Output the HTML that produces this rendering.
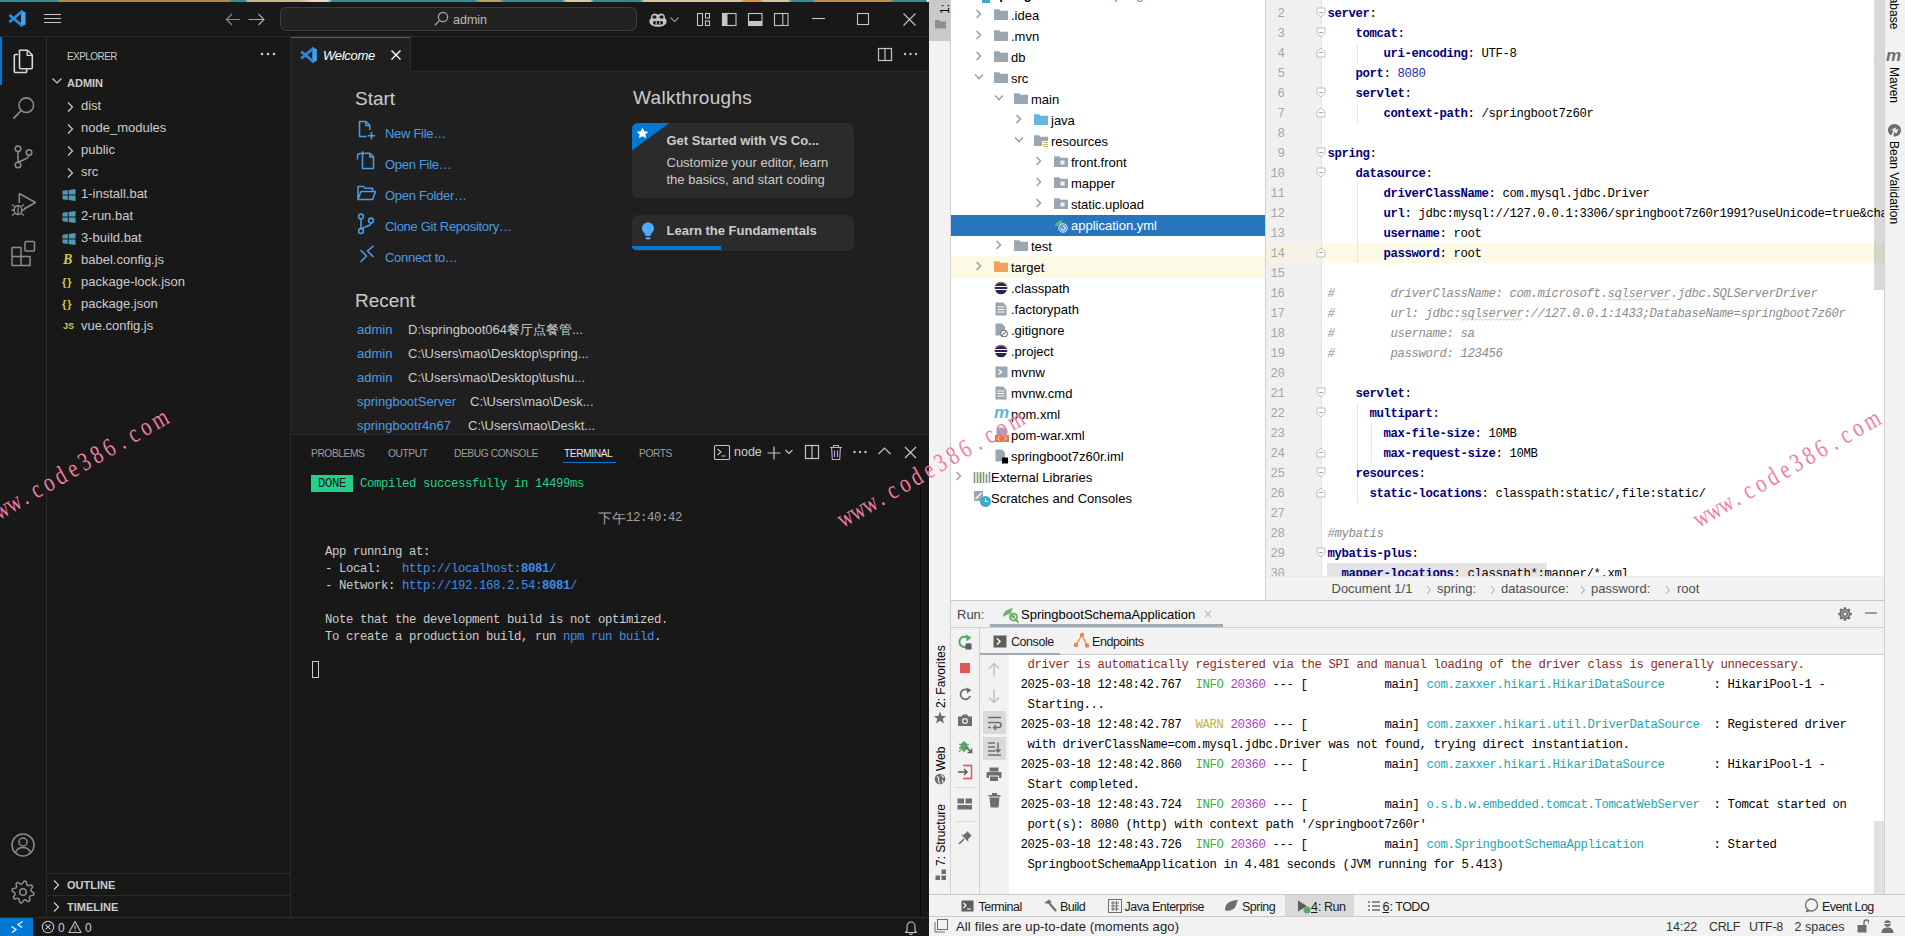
<!DOCTYPE html><html><head><meta charset="utf-8"><style>
html,body{margin:0;padding:0}
body{width:1905px;height:936px;position:relative;overflow:hidden;background:#181818;font-family:"Liberation Sans",sans-serif}
.r{position:absolute;display:block}
.t{position:absolute;white-space:pre}
.clip{position:absolute;overflow:hidden}
</style></head><body>
<style>.t{line-height:0}</style>
<div class="r" style="left:0px;top:0px;width:929px;height:2px;background:linear-gradient(90deg,#2e8e98 0,#2e8e98 57px,#b08a3e 60px,#b08a3e 228px,#2e8e98 232px,#2e8e98 245px,#c9b88e 248px,#c9b88e 300px,#e8dcc0 312px,#e8dcc0 328px,#2e8e98 332px,#2e8e98 474px,#b8a060 480px,#b8a060 500px,#2e8e98 504px,#2e8e98 562px,#d8c8a0 566px,#d8c8a0 590px,#2e8e98 594px,#2e8e98 640px,#d8c8a0 644px,#d8c8a0 740px,#d89a30 744px,#d89a30 760px,#d8c8a0 764px,#d8c8a0 788px,#2e8e98 792px,#2e8e98 812px,#c09040 816px,#c09040 890px,#2e8e98 894px,#2e8e98 926px,#e8e8e0 927px);"></div>
<div class="r" style="left:0px;top:2px;width:929px;height:34px;background:#181818;"></div>
<div class="r" style="left:0px;top:36px;width:929px;height:1px;background:#2b2b2b;"></div>
<svg class="r" style="left:8px;top:9px;" width="19" height="19" viewBox="0 0 19 19"><path d="M13 1.2 L17.6 3.4 V15.6 L13 17.8 Z" fill="#3ea6f0"/><path d="M13.6 2.8 L2.4 12.2 M13.6 16.2 L2.4 6.8" stroke="#2b8ad8" stroke-width="2.8" stroke-linecap="square"/></svg>
<svg class="r" style="left:43px;top:13px;" width="19" height="12" viewBox="0 0 19 12"><path d="M1 1.5H18M1 5.5H18M1 9.5H18" stroke="#c5c5c5" stroke-width="1.1"/></svg>
<svg class="r" style="left:224px;top:12px;" width="18" height="15" viewBox="0 0 18 15"><path d="M2.5 7.5H16M8 2L2.5 7.5L8 13" stroke="#8b8b8b" stroke-width="1.2" fill="none"/></svg>
<svg class="r" style="left:247px;top:12px;" width="20" height="15" viewBox="0 0 20 15"><path d="M1.5 7.5H17M11.5 2L17 7.5L11.5 13" stroke="#a8a8a8" stroke-width="1.2" fill="none"/></svg>
<div class="r" style="left:280px;top:7px;width:355px;height:22px;background:#222222;border:1px solid #3c3c3c;border-radius:6px"></div>
<svg class="r" style="left:433px;top:11px;" width="16" height="16" viewBox="0 0 16 16"><circle cx="10" cy="6" r="4.6" stroke="#a9a9a9" stroke-width="1.2" fill="none"/><path d="M6.6 9.4L1.8 14.2" stroke="#a9a9a9" stroke-width="1.3"/></svg>
<div class="t" style="left:453px;top:19.67px;font-size:12.5px;color:#bdbdbd;font-weight:400;font-family:'Liberation Sans', sans-serif;">admin</div>
<svg class="r" style="left:648px;top:12px;" width="20" height="16" viewBox="0 0 20 16"><path d="M3 5.5C3 2.5 5 1.5 7 1.5C8.5 1.5 9.5 2.3 10 3C10.5 2.3 11.5 1.5 13 1.5C15 1.5 17 2.5 17 5.5V6.5C18.2 7.2 18.6 8.3 18.6 9.5C18.6 12.8 14.5 14.8 10 14.8C5.5 14.8 1.4 12.8 1.4 9.5C1.4 8.3 1.8 7.2 3 6.5Z" fill="#c5c5c5"/>
<rect x="4.6" y="3.4" width="3.8" height="3.2" rx="1.2" fill="#181818"/><rect x="11.6" y="3.4" width="3.8" height="3.2" rx="1.2" fill="#181818"/>
<rect x="5" y="9" width="10" height="3.6" rx="1.6" fill="#181818"/><rect x="7.6" y="9.2" width="1.2" height="3" fill="#c5c5c5"/><rect x="11.2" y="9.2" width="1.2" height="3" fill="#c5c5c5"/></svg>
<svg class="r" style="left:669px;top:16px;" width="11" height="7" viewBox="0 0 11 7"><path d="M1.5 1.5L5.5 5.5L9.5 1.5" stroke="#9a9a9a" stroke-width="1.1" fill="none"/></svg>
<svg class="r" style="left:696px;top:12px;" width="16" height="15" viewBox="0 0 16 15"><rect x="1.5" y="1.5" width="5" height="12" stroke="#c5c5c5" stroke-width="1.1" fill="none"/><rect x="9.5" y="1.5" width="4" height="4.5" stroke="#c5c5c5" stroke-width="1.1" fill="none"/><rect x="9.5" y="9" width="4" height="4.5" stroke="#c5c5c5" stroke-width="1.1" fill="none"/></svg>
<svg class="r" style="left:721px;top:12px;" width="17" height="15" viewBox="0 0 17 15"><rect x="1.5" y="1.5" width="13.5" height="12" stroke="#c5c5c5" stroke-width="1.1" fill="none"/><rect x="1.5" y="1.5" width="5" height="12" fill="#c5c5c5"/></svg>
<svg class="r" style="left:747px;top:12px;" width="17" height="15" viewBox="0 0 17 15"><rect x="1.5" y="1.5" width="13.5" height="12" stroke="#c5c5c5" stroke-width="1.1" fill="none"/><rect x="1.5" y="9" width="13.5" height="4.5" fill="#c5c5c5"/></svg>
<svg class="r" style="left:773px;top:12px;" width="17" height="15" viewBox="0 0 17 15"><rect x="1.5" y="1.5" width="13.5" height="12" stroke="#c5c5c5" stroke-width="1.1" fill="none"/><path d="M9.8 1.5V13.5" stroke="#c5c5c5" stroke-width="1.1"/></svg>
<svg class="r" style="left:810px;top:12px;" width="17" height="14" viewBox="0 0 17 14"><path d="M2 6.5H15" stroke="#c5c5c5" stroke-width="1.1"/></svg>
<svg class="r" style="left:855px;top:11px;" width="16" height="16" viewBox="0 0 16 16"><rect x="2.5" y="2.5" width="11" height="11" stroke="#c5c5c5" stroke-width="1.1" fill="none"/></svg>
<svg class="r" style="left:901px;top:11px;" width="17" height="17" viewBox="0 0 17 17"><path d="M2.5 2.5L14.5 14.5M14.5 2.5L2.5 14.5" stroke="#c5c5c5" stroke-width="1.1"/></svg>
<div class="r" style="left:46px;top:37px;width:1px;height:881px;background:#2b2b2b;"></div>
<div class="r" style="left:0px;top:37px;width:2px;height:48px;background:#0078d4;"></div>
<svg class="r" style="left:10px;top:47px;" width="26" height="28" viewBox="0 0 26 28"><path d="M8 7.5H5.5A1.2 1.2 0 0 0 4.3 8.7V24.3A1.2 1.2 0 0 0 5.5 25.5H15.5A1.2 1.2 0 0 0 16.7 24.3V22" stroke="#d8d8d8" stroke-width="1.6" fill="none"/>
<path d="M9.5 3.2H17.5L22.3 8V20.5A1.2 1.2 0 0 1 21.1 21.7H10.7A1.2 1.2 0 0 1 9.5 20.5Z" stroke="#d8d8d8" stroke-width="1.6" fill="none" stroke-linejoin="round"/>
<path d="M17.2 3.5V8.3H22" stroke="#d8d8d8" stroke-width="1.3" fill="none"/></svg>
<svg class="r" style="left:10px;top:93px;" width="28" height="30" viewBox="0 0 28 30"><circle cx="16.3" cy="12.2" r="7.3" stroke="#8c8c8c" stroke-width="1.6" fill="none"/><path d="M11.2 17.5L3.4 25.6" stroke="#8c8c8c" stroke-width="1.8"/></svg>
<svg class="r" style="left:10px;top:140px;" width="26" height="30" viewBox="0 0 26 30"><circle cx="8" cy="8.8" r="2.8" stroke="#8c8c8c" stroke-width="1.5" fill="none"/><circle cx="19" cy="12.5" r="2.8" stroke="#8c8c8c" stroke-width="1.5" fill="none"/><circle cx="8" cy="25" r="2.8" stroke="#8c8c8c" stroke-width="1.5" fill="none"/><path d="M8 11.6V22.2M19 15.3C19 19 13 19.5 8.6 22.2" stroke="#8c8c8c" stroke-width="1.5" fill="none"/></svg>
<svg class="r" style="left:8px;top:190px;" width="30" height="30" viewBox="0 0 30 30"><path d="M11.3 3.5V13M11.3 3.5L27.5 12.5L16 19" stroke="#8c8c8c" stroke-width="1.5" fill="none" stroke-linejoin="round"/>
<ellipse cx="10" cy="20" rx="3.8" ry="4.6" stroke="#8c8c8c" stroke-width="1.5" fill="none"/><path d="M10 15.4V24.6M6.2 20H3.4M16.6 20H13.8M6.6 16.5L4 14.4M13.4 16.5L16 14.4M6.6 23.5L4 25.6M13.4 23.5L16 25.6" stroke="#8c8c8c" stroke-width="1.3"/></svg>
<svg class="r" style="left:9px;top:238px;" width="28" height="30" viewBox="0 0 28 30"><path d="M3 9.5H12V18.5H3ZM3 18.5H12V27.5H3ZM12 18.5H21V27.5H12Z" stroke="#8c8c8c" stroke-width="1.5" fill="none" stroke-linejoin="round"/><rect x="16" y="3.5" width="9.5" height="9.5" rx="1" stroke="#8c8c8c" stroke-width="1.5" fill="none"/></svg>
<svg class="r" style="left:10px;top:832px;" width="26" height="26" viewBox="0 0 26 26"><circle cx="13" cy="13" r="11" stroke="#8c8c8c" stroke-width="1.5" fill="none"/><circle cx="13" cy="10" r="4" stroke="#8c8c8c" stroke-width="1.5" fill="none"/><path d="M5.5 20.5C7 17 10 15.6 13 15.6C16 15.6 19 17 20.5 20.5" stroke="#8c8c8c" stroke-width="1.5" fill="none"/></svg>
<svg class="r" style="left:10px;top:879px;" width="26" height="26" viewBox="0 0 26 26"><polygon points="14.08,2.05 16.19,2.47 16.87,5.77 18.20,6.66 21.50,6.02 22.70,7.81 20.85,10.62 21.16,12.20 23.95,14.08 23.53,16.19 20.23,16.87 19.34,18.20 19.98,21.50 18.19,22.70 15.38,20.85 13.80,21.16 11.92,23.95 9.81,23.53 9.13,20.23 7.80,19.34 4.50,19.98 3.30,18.19 5.15,15.38 4.84,13.80 2.05,11.92 2.47,9.81 5.77,9.13 6.66,7.80 6.02,4.50 7.81,3.30 10.62,5.15 12.20,4.84" stroke="#8c8c8c" stroke-width="1.5" fill="none" stroke-linejoin="round"/><circle cx="13" cy="13" r="3.3" stroke="#8c8c8c" stroke-width="1.5" fill="none"/></svg>
<div class="r" style="left:47px;top:37px;width:243px;height:881px;background:#181818;"></div>
<div class="r" style="left:290px;top:37px;width:1px;height:881px;background:#2b2b2b;"></div>
<div class="t" style="left:67px;top:55.69px;font-size:11px;color:#cccccc;font-weight:400;font-family:'Liberation Sans', sans-serif;letter-spacing:-0.55px;transform:scaleX(0.9);transform-origin:left">EXPLORER</div>
<svg class="r" style="left:259px;top:50px;" width="18" height="8" viewBox="0 0 18 8"><circle cx="3" cy="4" r="1.3" fill="#cccccc"/><circle cx="9" cy="4" r="1.3" fill="#cccccc"/><circle cx="15" cy="4" r="1.3" fill="#cccccc"/></svg>
<svg class="r" style="left:51px;top:76px;" width="12" height="10" viewBox="0 0 12 10"><path d="M1.5 2.5L6 7L10.5 2.5" stroke="#cccccc" stroke-width="1.2" fill="none"/></svg>
<div class="t" style="left:67px;top:83.19px;font-size:11px;color:#cccccc;font-weight:700;font-family:'Liberation Sans', sans-serif;">ADMIN</div>
<svg class="r" style="left:66px;top:100.5px;" width="8" height="12" viewBox="0 0 8 12"><path d="M2 1.5L6.5 6L2 10.5" stroke="#cccccc" stroke-width="1.2" fill="none"/></svg>
<div class="t" style="left:81px;top:106.0px;font-size:13px;color:#cccccc;font-weight:400;font-family:'Liberation Sans', sans-serif;">dist</div>
<svg class="r" style="left:66px;top:122.5px;" width="8" height="12" viewBox="0 0 8 12"><path d="M2 1.5L6.5 6L2 10.5" stroke="#cccccc" stroke-width="1.2" fill="none"/></svg>
<div class="t" style="left:81px;top:128.0px;font-size:13px;color:#cccccc;font-weight:400;font-family:'Liberation Sans', sans-serif;">node_modules</div>
<svg class="r" style="left:66px;top:144.5px;" width="8" height="12" viewBox="0 0 8 12"><path d="M2 1.5L6.5 6L2 10.5" stroke="#cccccc" stroke-width="1.2" fill="none"/></svg>
<div class="t" style="left:81px;top:150.0px;font-size:13px;color:#cccccc;font-weight:400;font-family:'Liberation Sans', sans-serif;">public</div>
<svg class="r" style="left:66px;top:166.5px;" width="8" height="12" viewBox="0 0 8 12"><path d="M2 1.5L6.5 6L2 10.5" stroke="#cccccc" stroke-width="1.2" fill="none"/></svg>
<div class="t" style="left:81px;top:172.0px;font-size:13px;color:#cccccc;font-weight:400;font-family:'Liberation Sans', sans-serif;">src</div>
<svg class="r" style="left:62px;top:188.5px;" width="14" height="12" viewBox="0 0 14 12"><path d="M0.5 1.8L5.8 1.1V5.6H0.5ZM6.7 1L13.5 0.1V5.6H6.7ZM0.5 6.5H5.8V11L0.5 10.3ZM6.7 6.5H13.5V12L6.7 11.1Z" fill="#519aba"/></svg>
<div class="t" style="left:81px;top:194.0px;font-size:13px;color:#cccccc;font-weight:400;font-family:'Liberation Sans', sans-serif;">1-install.bat</div>
<svg class="r" style="left:62px;top:210.5px;" width="14" height="12" viewBox="0 0 14 12"><path d="M0.5 1.8L5.8 1.1V5.6H0.5ZM6.7 1L13.5 0.1V5.6H6.7ZM0.5 6.5H5.8V11L0.5 10.3ZM6.7 6.5H13.5V12L6.7 11.1Z" fill="#519aba"/></svg>
<div class="t" style="left:81px;top:216.0px;font-size:13px;color:#cccccc;font-weight:400;font-family:'Liberation Sans', sans-serif;">2-run.bat</div>
<svg class="r" style="left:62px;top:232.5px;" width="14" height="12" viewBox="0 0 14 12"><path d="M0.5 1.8L5.8 1.1V5.6H0.5ZM6.7 1L13.5 0.1V5.6H6.7ZM0.5 6.5H5.8V11L0.5 10.3ZM6.7 6.5H13.5V12L6.7 11.1Z" fill="#519aba"/></svg>
<div class="t" style="left:81px;top:238.0px;font-size:13px;color:#cccccc;font-weight:400;font-family:'Liberation Sans', sans-serif;">3-build.bat</div>
<div class="t" style="left:63px;top:259.65px;font-size:14px;color:#cbcb41;font-weight:700;font-family:'Liberation Sans', sans-serif;font-style:italic;font-family:'Liberation Serif',serif">B</div>
<div class="t" style="left:81px;top:260.0px;font-size:13px;color:#cccccc;font-weight:400;font-family:'Liberation Sans', sans-serif;">babel.config.js</div>
<div class="t" style="left:62px;top:282.19px;font-size:11px;color:#cbcb41;font-weight:700;font-family:'Liberation Sans', sans-serif;letter-spacing:-1px">{ }</div>
<div class="t" style="left:81px;top:282.0px;font-size:13px;color:#cccccc;font-weight:400;font-family:'Liberation Sans', sans-serif;">package-lock.json</div>
<div class="t" style="left:62px;top:304.19px;font-size:11px;color:#cbcb41;font-weight:700;font-family:'Liberation Sans', sans-serif;letter-spacing:-1px">{ }</div>
<div class="t" style="left:81px;top:304.0px;font-size:13px;color:#cccccc;font-weight:400;font-family:'Liberation Sans', sans-serif;">package.json</div>
<div class="t" style="left:63px;top:326.38px;font-size:9px;color:#cbcb41;font-weight:700;font-family:'Liberation Sans', sans-serif;">JS</div>
<div class="t" style="left:81px;top:326.0px;font-size:13px;color:#cccccc;font-weight:400;font-family:'Liberation Sans', sans-serif;">vue.config.js</div>
<div class="r" style="left:47px;top:873px;width:243px;height:1px;background:#2b2b2b;"></div>
<div class="r" style="left:47px;top:895px;width:243px;height:1px;background:#2b2b2b;"></div>
<svg class="r" style="left:52px;top:879px;" width="8" height="12" viewBox="0 0 8 12"><path d="M2 1.5L6.5 6L2 10.5" stroke="#cccccc" stroke-width="1.2" fill="none"/></svg>
<div class="t" style="left:67px;top:885.19px;font-size:11px;color:#cccccc;font-weight:700;font-family:'Liberation Sans', sans-serif;">OUTLINE</div>
<svg class="r" style="left:52px;top:901px;" width="8" height="12" viewBox="0 0 8 12"><path d="M2 1.5L6.5 6L2 10.5" stroke="#cccccc" stroke-width="1.2" fill="none"/></svg>
<div class="t" style="left:67px;top:907.19px;font-size:11px;color:#cccccc;font-weight:700;font-family:'Liberation Sans', sans-serif;">TIMELINE</div>
<div class="r" style="left:291px;top:37px;width:638px;height:34px;background:#181818;"></div>
<div class="r" style="left:291px;top:71px;width:638px;height:1px;background:#2b2b2b;"></div>
<div class="r" style="left:291px;top:37px;width:120px;height:35px;background:#1f1f1f;"></div>
<div class="r" style="left:291px;top:37px;width:120px;height:1px;background:#0078d4;"></div>
<div class="r" style="left:410px;top:37px;width:1px;height:34px;background:#2b2b2b;"></div>
<svg class="r" style="left:300px;top:46px;" width="18" height="18" viewBox="0 0 18 18"><path d="M12.3 1 L16.8 3.2 V14.8 L12.3 17 Z" fill="#3ea6f0"/><path d="M13 2.6 L2.2 11.6 M13 15.4 L2.2 6.4" stroke="#2b8ad8" stroke-width="2.7" stroke-linecap="square"/></svg>
<div class="t" style="left:323px;top:55.8px;font-size:13px;color:#ffffff;font-weight:400;font-family:'Liberation Sans', sans-serif;font-style:italic;letter-spacing:-0.3px">Welcome</div>
<svg class="r" style="left:389px;top:48px;" width="14" height="14" viewBox="0 0 14 14"><path d="M2.5 2.5L11.5 11.5M11.5 2.5L2.5 11.5" stroke="#ffffff" stroke-width="1.4"/></svg>
<svg class="r" style="left:877px;top:47px;" width="16" height="15" viewBox="0 0 16 15"><rect x="1.5" y="1.5" width="13" height="12" stroke="#c5c5c5" stroke-width="1.2" fill="none"/><path d="M8 1.5V13.5" stroke="#c5c5c5" stroke-width="1.2"/></svg>
<svg class="r" style="left:902px;top:50px;" width="17" height="8" viewBox="0 0 17 8"><circle cx="3" cy="4" r="1.2" fill="#c5c5c5"/><circle cx="8.5" cy="4" r="1.2" fill="#c5c5c5"/><circle cx="14" cy="4" r="1.2" fill="#c5c5c5"/></svg>
<div class="r" style="left:291px;top:72px;width:638px;height:362px;background:#1f1f1f;"></div>
<div class="t" style="left:355px;top:98.72px;font-size:19px;color:#cccccc;font-weight:400;font-family:'Liberation Sans', sans-serif;">Start</div>
<div class="t" style="left:385px;top:133.7px;font-size:13px;color:#4c9be2;font-weight:400;font-family:'Liberation Sans', sans-serif;letter-spacing:-0.3px">New File…</div>
<div class="t" style="left:385px;top:164.7px;font-size:13px;color:#4c9be2;font-weight:400;font-family:'Liberation Sans', sans-serif;letter-spacing:-0.3px">Open File…</div>
<div class="t" style="left:385px;top:195.7px;font-size:13px;color:#4c9be2;font-weight:400;font-family:'Liberation Sans', sans-serif;letter-spacing:-0.3px">Open Folder…</div>
<div class="t" style="left:385px;top:226.7px;font-size:13px;color:#4c9be2;font-weight:400;font-family:'Liberation Sans', sans-serif;letter-spacing:-0.3px">Clone Git Repository…</div>
<div class="t" style="left:385px;top:257.7px;font-size:13px;color:#4c9be2;font-weight:400;font-family:'Liberation Sans', sans-serif;letter-spacing:-0.3px">Connect to…</div>
<svg class="r" style="left:356px;top:120px;" width="22" height="22" viewBox="0 0 22 22"><path d="M10.5 16.5H3.5V1.5H10L13.8 5.3V10" stroke="#4c9be2" stroke-width="1.55" fill="none" stroke-linejoin="round"/><path d="M9.8 1.5V5.5H13.8" stroke="#4c9be2" stroke-width="1.45" fill="none"/><path d="M15.5 12V19.5M11.8 15.8H19.2" stroke="#4c9be2" stroke-width="1.55"/></svg>
<svg class="r" style="left:356px;top:151px;" width="22" height="22" viewBox="0 0 22 22"><path d="M6.5 4.5V17.5H17.5V5.8L14 2.3H9" stroke="#4c9be2" stroke-width="1.55" fill="none" stroke-linejoin="round"/><path d="M13.8 2.3V6H17.5" stroke="#4c9be2" stroke-width="1.45" fill="none"/><path d="M1.5 8.5V5C1.5 3.6 2.6 2.5 4 2.5H8M6 0.6L8 2.5L6 4.4" stroke="#4c9be2" stroke-width="1.45" fill="none"/></svg>
<svg class="r" style="left:356px;top:183px;" width="22" height="22" viewBox="0 0 22 22"><path d="M2 16.5V3.5H7.5L9.2 5.2H16.5V8.2M2 16.5L5 8.5H19.5L16.5 16.5Z" stroke="#4c9be2" stroke-width="1.55" fill="none" stroke-linejoin="round"/></svg>
<svg class="r" style="left:356px;top:212px;" width="22" height="24" viewBox="0 0 22 24"><circle cx="5" cy="4.5" r="2.4" stroke="#4c9be2" stroke-width="1.55" fill="none"/><circle cx="15" cy="8.5" r="2.4" stroke="#4c9be2" stroke-width="1.55" fill="none"/><circle cx="5" cy="19" r="2.4" stroke="#4c9be2" stroke-width="1.55" fill="none"/><path d="M5 7V16.6M15 11C15 14.5 9 14 5.6 16.8" stroke="#4c9be2" stroke-width="1.55" fill="none"/></svg>
<svg class="r" style="left:357px;top:245px;" width="20" height="19" viewBox="0 0 20 19"><path d="M3.5 5L9.5 11L3.5 17M16.5 0.8L10.5 6L16.5 12" stroke="#4c9be2" stroke-width="1.55" fill="none"/></svg>
<div class="t" style="left:355px;top:301.02px;font-size:19px;color:#cccccc;font-weight:400;font-family:'Liberation Sans', sans-serif;">Recent</div>
<div class="t" style="left:357px;top:329.5px;font-size:13px;color:#4c9be2;font-weight:400;font-family:'Liberation Sans', sans-serif;">admin</div>
<div class="t" style="left:408px;top:329.5px;font-size:13px;color:#cccccc;font-weight:400;font-family:'Liberation Sans', sans-serif;">D:\springboot064餐厅点餐管...</div>
<div class="t" style="left:357px;top:353.5px;font-size:13px;color:#4c9be2;font-weight:400;font-family:'Liberation Sans', sans-serif;">admin</div>
<div class="t" style="left:408px;top:353.5px;font-size:13px;color:#cccccc;font-weight:400;font-family:'Liberation Sans', sans-serif;">C:\Users\mao\Desktop\spring...</div>
<div class="t" style="left:357px;top:377.5px;font-size:13px;color:#4c9be2;font-weight:400;font-family:'Liberation Sans', sans-serif;">admin</div>
<div class="t" style="left:408px;top:377.5px;font-size:13px;color:#cccccc;font-weight:400;font-family:'Liberation Sans', sans-serif;">C:\Users\mao\Desktop\tushu...</div>
<div class="t" style="left:357px;top:401.5px;font-size:13px;color:#4c9be2;font-weight:400;font-family:'Liberation Sans', sans-serif;">springbootServer</div>
<div class="t" style="left:470px;top:401.5px;font-size:13px;color:#cccccc;font-weight:400;font-family:'Liberation Sans', sans-serif;">C:\Users\mao\Desk...</div>
<div class="t" style="left:357px;top:425.5px;font-size:13px;color:#4c9be2;font-weight:400;font-family:'Liberation Sans', sans-serif;">springbootr4n67</div>
<div class="t" style="left:468px;top:425.5px;font-size:13px;color:#cccccc;font-weight:400;font-family:'Liberation Sans', sans-serif;">C:\Users\mao\Deskt...</div>
<div class="t" style="left:633px;top:98.42px;font-size:19px;color:#cccccc;font-weight:400;font-family:'Liberation Sans', sans-serif;letter-spacing:0.3px">Walkthroughs</div>
<div class="r" style="left:632px;top:123px;width:222px;height:75px;background:#2b2b2b;border-radius:6px"></div>
<svg class="r" style="left:632px;top:123px;" width="38" height="28" viewBox="0 0 38 28"><path d="M6 0H37.5L0 27.5V6A6 6 0 0 1 6 0Z" fill="#0078d4"/><path d="M10.5 4.5L12.3 8.3L16.3 8.7L13.3 11.4L14.2 15.3L10.5 13.3L6.8 15.3L7.7 11.4L4.7 8.7L8.7 8.3Z" fill="#ffffff"/></svg>
<div class="t" style="left:666.5px;top:140.5px;font-size:13px;color:#cccccc;font-weight:700;font-family:'Liberation Sans', sans-serif;">Get Started with VS Co...</div>
<div class="t" style="left:666.5px;top:163.0px;font-size:13px;color:#cccccc;font-weight:400;font-family:'Liberation Sans', sans-serif;">Customize your editor, learn</div>
<div class="t" style="left:666.5px;top:179.5px;font-size:13px;color:#cccccc;font-weight:400;font-family:'Liberation Sans', sans-serif;">the basics, and start coding</div>
<div class="r" style="left:632px;top:215px;width:222px;height:36px;background:#2b2b2b;border-radius:6px;overflow:hidden"></div>
<div class="r" style="left:632px;top:246px;width:89px;height:4px;background:#0078d4;border-radius:0 0 0 6px"></div>
<svg class="r" style="left:639px;top:221px;" width="18" height="20" viewBox="0 0 18 20"><path d="M9 1.5C5.4 1.5 3 4.2 3 7.3C3 9.7 4.4 11.2 5.5 12.5C6.2 13.3 6.4 14 6.4 15H11.6C11.6 14 11.8 13.3 12.5 12.5C13.6 11.2 15 9.7 15 7.3C15 4.2 12.6 1.5 9 1.5Z" fill="#4daafc"/><path d="M6.6 16.2H11.4V17.3C11.4 18 10.8 18.6 10.1 18.6H7.9C7.2 18.6 6.6 18 6.6 17.3Z" fill="#4daafc"/></svg>
<div class="t" style="left:666.5px;top:231.0px;font-size:13px;color:#cccccc;font-weight:700;font-family:'Liberation Sans', sans-serif;">Learn the Fundamentals</div>
<div class="r" style="left:291px;top:434px;width:638px;height:483px;background:#181818;"></div>
<div class="r" style="left:291px;top:434px;width:638px;height:1px;background:#2b2b2b;"></div>
<div class="r" style="left:920px;top:484px;width:1px;height:433px;background:#0a0a0a;"></div>
<div class="t" style="left:311px;top:452.99px;font-size:11px;color:#9d9d9d;font-weight:400;font-family:'Liberation Sans', sans-serif;letter-spacing:-0.45px;transform:scaleX(0.93);transform-origin:left">PROBLEMS</div>
<div class="t" style="left:388px;top:452.99px;font-size:11px;color:#9d9d9d;font-weight:400;font-family:'Liberation Sans', sans-serif;letter-spacing:-0.45px;transform:scaleX(0.93);transform-origin:left">OUTPUT</div>
<div class="t" style="left:454px;top:452.99px;font-size:11px;color:#9d9d9d;font-weight:400;font-family:'Liberation Sans', sans-serif;letter-spacing:-0.45px;transform:scaleX(0.93);transform-origin:left">DEBUG CONSOLE</div>
<div class="t" style="left:564px;top:452.99px;font-size:11px;color:#e7e7e7;font-weight:400;font-family:'Liberation Sans', sans-serif;letter-spacing:-0.45px;transform:scaleX(0.93);transform-origin:left">TERMINAL</div>
<div class="t" style="left:639px;top:452.99px;font-size:11px;color:#9d9d9d;font-weight:400;font-family:'Liberation Sans', sans-serif;letter-spacing:-0.45px;transform:scaleX(0.93);transform-origin:left">PORTS</div>
<div class="r" style="left:563px;top:462px;width:53px;height:1px;background:#0078d4;"></div>
<svg class="r" style="left:713px;top:444px;" width="18" height="17" viewBox="0 0 18 17"><rect x="1.5" y="1.5" width="15" height="14" rx="1" stroke="#c5c5c5" stroke-width="1.1" fill="none"/><path d="M4.5 5L8 8L4.5 11M8.5 12H12.5" stroke="#c5c5c5" stroke-width="1.1" fill="none"/></svg>
<div class="t" style="left:734px;top:452.17px;font-size:12.5px;color:#cccccc;font-weight:400;font-family:'Liberation Sans', sans-serif;">node</div>
<svg class="r" style="left:766px;top:445px;" width="16" height="16" viewBox="0 0 16 16"><path d="M8 1.5V14.5M1.5 8H14.5" stroke="#c5c5c5" stroke-width="1.2"/></svg>
<svg class="r" style="left:784px;top:448px;" width="10" height="8" viewBox="0 0 10 8"><path d="M1.5 2L5 5.5L8.5 2" stroke="#c5c5c5" stroke-width="1.1" fill="none"/></svg>
<svg class="r" style="left:804px;top:444px;" width="16" height="16" viewBox="0 0 16 16"><rect x="1.5" y="1.5" width="13" height="13" stroke="#c5c5c5" stroke-width="1.2" fill="none"/><path d="M8 1.5V14.5" stroke="#c5c5c5" stroke-width="1.2"/></svg>
<svg class="r" style="left:829px;top:444px;" width="14" height="17" viewBox="0 0 14 17"><path d="M1 3.5H13M4.5 3.5V1.5H9.5V3.5M2.6 3.5L3.3 15.5H10.7L11.4 3.5M5.5 6.5V13M8.5 6.5V13" stroke="#bfa6dc" stroke-width="1.1" fill="none"/></svg>
<svg class="r" style="left:852px;top:449px;" width="16" height="6" viewBox="0 0 16 6"><circle cx="2.5" cy="3" r="1.2" fill="#c5c5c5"/><circle cx="8" cy="3" r="1.2" fill="#c5c5c5"/><circle cx="13.5" cy="3" r="1.2" fill="#c5c5c5"/></svg>
<svg class="r" style="left:877px;top:446px;" width="15" height="10" viewBox="0 0 15 10"><path d="M1.5 8L7.5 2L13.5 8" stroke="#c5c5c5" stroke-width="1.2" fill="none"/></svg>
<svg class="r" style="left:903px;top:445px;" width="15" height="15" viewBox="0 0 15 15"><path d="M2 2L13 13M13 2L2 13" stroke="#c5c5c5" stroke-width="1.2"/></svg>
<div class="r" style="left:311px;top:475px;width:42px;height:17px;background:#23d18b;"></div>
<div class="t" style="left:318.0px;top:484.42px;font-size:12.3px;color:#181818;font-weight:400;font-family:'Liberation Mono', monospace;letter-spacing:-0.38px;">DONE</div>
<div class="t" style="left:360.0px;top:484.42px;font-size:12.3px;color:#23d18b;font-weight:400;font-family:'Liberation Mono', monospace;letter-spacing:-0.38px;">Compiled successfully in 14499ms</div>
<div class="t" style="left:598.4px;top:517.65px;font-size:14px;color:#a0a0a0;font-weight:400;font-family:'Liberation Sans', sans-serif;font-family:sans-serif">下午</div>
<div class="t" style="left:626.0px;top:518.42px;font-size:12.3px;color:#a0a0a0;font-weight:400;font-family:'Liberation Mono', monospace;letter-spacing:-0.38px;">12:40:42</div>
<div class="t" style="left:325.0px;top:552.42px;font-size:12.3px;color:#cccccc;font-weight:400;font-family:'Liberation Mono', monospace;letter-spacing:-0.38px;">App running at:</div>
<div class="t" style="left:325.0px;top:569.42px;font-size:12.3px;color:#cccccc;font-weight:400;font-family:'Liberation Mono', monospace;letter-spacing:-0.38px;">- Local:   </div>
<div class="t" style="left:402.0px;top:569.42px;font-size:12.3px;color:#3b8eea;font-weight:400;font-family:'Liberation Mono', monospace;letter-spacing:-0.38px;">http://localhost:</div>
<div class="t" style="left:521.0px;top:569.42px;font-size:12.3px;color:#3b8eea;font-weight:400;font-family:'Liberation Mono', monospace;letter-spacing:-0.38px;font-weight:700">8081</div>
<div class="t" style="left:549.0px;top:569.42px;font-size:12.3px;color:#3b8eea;font-weight:400;font-family:'Liberation Mono', monospace;letter-spacing:-0.38px;">/</div>
<div class="t" style="left:325.0px;top:586.42px;font-size:12.3px;color:#cccccc;font-weight:400;font-family:'Liberation Mono', monospace;letter-spacing:-0.38px;">- Network: </div>
<div class="t" style="left:402.0px;top:586.42px;font-size:12.3px;color:#3b8eea;font-weight:400;font-family:'Liberation Mono', monospace;letter-spacing:-0.38px;">http://192.168.2.54:</div>
<div class="t" style="left:542.0px;top:586.42px;font-size:12.3px;color:#3b8eea;font-weight:400;font-family:'Liberation Mono', monospace;letter-spacing:-0.38px;font-weight:700">8081</div>
<div class="t" style="left:570.0px;top:586.42px;font-size:12.3px;color:#3b8eea;font-weight:400;font-family:'Liberation Mono', monospace;letter-spacing:-0.38px;">/</div>
<div class="t" style="left:325.0px;top:620.42px;font-size:12.3px;color:#cccccc;font-weight:400;font-family:'Liberation Mono', monospace;letter-spacing:-0.38px;">Note that the development build is not optimized.</div>
<div class="t" style="left:325.0px;top:637.42px;font-size:12.3px;color:#cccccc;font-weight:400;font-family:'Liberation Mono', monospace;letter-spacing:-0.38px;">To create a production build, run </div>
<div class="t" style="left:563.0px;top:637.42px;font-size:12.3px;color:#3b8eea;font-weight:400;font-family:'Liberation Mono', monospace;letter-spacing:-0.38px;">npm run build</div>
<div class="t" style="left:654.0px;top:637.42px;font-size:12.3px;color:#cccccc;font-weight:400;font-family:'Liberation Mono', monospace;letter-spacing:-0.38px;">.</div>
<div class="r" style="left:312px;top:661px;width:7px;height:17px;background:transparent;border:1px solid #cccccc;box-sizing:border-box"></div>
<div class="r" style="left:0px;top:917px;width:929px;height:1px;background:#2b2b2b;"></div>
<div class="r" style="left:0px;top:918px;width:929px;height:18px;background:#181818;"></div>
<div class="r" style="left:0px;top:918px;width:33px;height:18px;background:#0078d4;"></div>
<svg class="r" style="left:10px;top:920px;" width="14" height="14" viewBox="0 0 14 14"><path d="M1.5 6.5L6 9.5L2 12.5M12.5 1.5L8 4.5L12 7.5" stroke="#ffffff" stroke-width="1.2" fill="none"/></svg>
<svg class="r" style="left:41px;top:920px;" width="14" height="14" viewBox="0 0 14 14"><circle cx="7" cy="7" r="5.7" stroke="#c5c5c5" stroke-width="1.1" fill="none"/><path d="M4.6 4.6L9.4 9.4M9.4 4.6L4.6 9.4" stroke="#c5c5c5" stroke-width="1.1"/></svg>
<div class="t" style="left:58px;top:927.84px;font-size:12px;color:#cccccc;font-weight:400;font-family:'Liberation Sans', sans-serif;">0</div>
<svg class="r" style="left:68px;top:920px;" width="14" height="14" viewBox="0 0 14 14"><path d="M7 1.5L13 12.5H1Z" stroke="#c5c5c5" stroke-width="1.1" fill="none" stroke-linejoin="round"/><path d="M7 5.5V9M7 10.3V11.3" stroke="#c5c5c5" stroke-width="1.1"/></svg>
<div class="t" style="left:85px;top:927.84px;font-size:12px;color:#cccccc;font-weight:400;font-family:'Liberation Sans', sans-serif;">0</div>
<svg class="r" style="left:904px;top:920px;" width="14" height="15" viewBox="0 0 14 15"><path d="M3 11V6.5C3 4 4.8 2 7 2C9.2 2 11 4 11 6.5V11L12.5 12.5H1.5Z" stroke="#c5c5c5" stroke-width="1.1" fill="none" stroke-linejoin="round"/><path d="M5.5 13.5C5.8 14.3 6.3 14.6 7 14.6C7.7 14.6 8.2 14.3 8.5 13.5" stroke="#c5c5c5" stroke-width="1.1" fill="none"/></svg>
<div class="r" style="left:929px;top:0px;width:976px;height:936px;background:#ffffff;"></div>
<div class="r" style="left:929px;top:0px;width:21px;height:895px;background:#f2f2f2;"></div>
<div class="r" style="left:950px;top:0px;width:1px;height:895px;background:#d1d1d1;"></div>
<div class="r" style="left:929px;top:0px;width:21px;height:41px;background:#c9c9c9;"></div>
<div class="t" style="left:945px;top:14px;transform:rotate(-90deg);transform-origin:0 0;font-size:12px;line-height:0;color:#000">1: Project</div>
<svg class="r" style="left:935px;top:19px;" width="11" height="10" viewBox="0 0 11 10"><path d="M0 1H4L5 2.5H11V9.5H0Z" fill="#8e8e8e"/></svg>
<div class="t" style="left:935px;top:708px;transform:rotate(-90deg);transform-origin:0 0;font-size:12px;line-height:12px;color:#000;font-family:'Liberation Sans', sans-serif">2: Favorites</div>
<svg class="r" style="left:933px;top:711px;" width="14" height="14" viewBox="0 0 14 14"><path d="M7 0.8L8.8 5H13.3L9.7 7.8L11 12.5L7 9.7L3 12.5L4.3 7.8L0.7 5H5.2Z" fill="#6e6e6e"/></svg>
<div class="t" style="left:935px;top:771px;transform:rotate(-90deg);transform-origin:0 0;font-size:12px;line-height:12px;color:#000;font-family:'Liberation Sans', sans-serif">Web</div>
<svg class="r" style="left:934px;top:773px;" width="12" height="12" viewBox="0 0 12 12"><circle cx="6" cy="6" r="5.3" fill="#6e6e6e"/><path d="M3 3.5C4.5 4 5 5 4.5 6.5C4 8 5 9 6 10.5M8 1.5C7.5 3 8.5 4 10 4.5M9 7C8 8 8.5 9.5 9.5 10" stroke="#f2f2f2" stroke-width="1.1" fill="none"/></svg>
<div class="t" style="left:935px;top:866px;transform:rotate(-90deg);transform-origin:0 0;font-size:12px;line-height:12px;color:#000;font-family:'Liberation Sans', sans-serif">7: Structure</div>
<svg class="r" style="left:935px;top:869px;" width="12" height="12" viewBox="0 0 12 12"><rect x="6.5" y="0.5" width="4.5" height="4.5" fill="#6e6e6e"/><rect x="0.5" y="6.5" width="4.5" height="4.5" fill="#6e6e6e"/><rect x="6.5" y="6.5" width="4.5" height="4.5" fill="#6e6e6e"/></svg>
<div class="r" style="left:1884px;top:0px;width:1px;height:895px;background:#d1d1d1;"></div>
<div class="r" style="left:1885px;top:0px;width:20px;height:895px;background:#f2f2f2;"></div>
<div class="t" style="left:1900px;top:-22px;transform:rotate(90deg);transform-origin:0 0;font-size:12px;line-height:12px;color:#000;font-family:'Liberation Sans', sans-serif">Database</div>
<div class="t" style="left:1886px;top:56px;font-size:17px;line-height:0;color:#6e6e6e;font-weight:700;font-style:italic">m</div>
<div class="t" style="left:1900px;top:67px;transform:rotate(90deg);transform-origin:0 0;font-size:12px;line-height:12px;color:#000;font-family:'Liberation Sans', sans-serif">Maven</div>
<svg class="r" style="left:1887px;top:123px;" width="15" height="15" viewBox="0 0 15 15"><path d="M7.5 1C4 1 1 3.8 1 7.3C1 9.5 2.2 11.4 4 12.5L6.5 8L4.5 6.5L9 4.5L8.5 7L11.5 5.5L9.5 10.5L7 9L6.5 13.5C6.8 13.6 7.2 13.6 7.5 13.6C11 13.6 14 10.8 14 7.3C14 3.8 11 1 7.5 1Z" fill="#6e6e6e"/></svg>
<div class="t" style="left:1900px;top:141px;transform:rotate(90deg);transform-origin:0 0;font-size:12px;line-height:12px;color:#000;font-family:'Liberation Sans', sans-serif">Bean Validation</div>
<div class="r" style="left:951px;top:0px;width:314px;height:600px;background:#ffffff;"></div>
<div class="r" style="left:951px;top:256px;width:314px;height:22px;background:#fcfae6;"></div>
<div class="r" style="left:951px;top:215px;width:314px;height:21px;background:#2675bf;"></div>
<svg class="r" style="left:982px;top:-8px;" width="8" height="11" viewBox="0 0 8 11"><rect x="0" y="0" width="8" height="11" fill="#40a8c8"/></svg>
<div class="t" style="left:992px;top:-5.5px;font-size:13px;color:#000;font-weight:700;font-family:'Liberation Sans', sans-serif;">springboot7z60r</div>
<div class="t" style="left:1108px;top:-5.5px;font-size:13px;color:#808080;font-weight:400;font-family:'Liberation Sans', sans-serif;">springboot</div>
<svg class="r" style="left:975px;top:9px;" width="8" height="10" viewBox="0 0 8 10"><path d="M1.5 1L5.5 5L1.5 9" stroke="#a2a2a2" stroke-width="1.6" fill="none"/></svg>
<svg class="r" style="left:994px;top:8px;" width="15" height="14" viewBox="0 0 15 14"><path d="M0 1.2H5.2L6.6 2.8H14V12H0Z" fill="#9aa7b0"/></svg>
<div class="t" style="left:1011px;top:15.5px;font-size:13px;color:#000000;font-weight:400;font-family:'Liberation Sans', sans-serif;">.idea</div>
<svg class="r" style="left:975px;top:30px;" width="8" height="10" viewBox="0 0 8 10"><path d="M1.5 1L5.5 5L1.5 9" stroke="#a2a2a2" stroke-width="1.6" fill="none"/></svg>
<svg class="r" style="left:994px;top:29px;" width="15" height="14" viewBox="0 0 15 14"><path d="M0 1.2H5.2L6.6 2.8H14V12H0Z" fill="#9aa7b0"/></svg>
<div class="t" style="left:1011px;top:36.5px;font-size:13px;color:#000000;font-weight:400;font-family:'Liberation Sans', sans-serif;">.mvn</div>
<svg class="r" style="left:975px;top:51px;" width="8" height="10" viewBox="0 0 8 10"><path d="M1.5 1L5.5 5L1.5 9" stroke="#a2a2a2" stroke-width="1.6" fill="none"/></svg>
<svg class="r" style="left:994px;top:50px;" width="15" height="14" viewBox="0 0 15 14"><path d="M0 1.2H5.2L6.6 2.8H14V12H0Z" fill="#9aa7b0"/></svg>
<div class="t" style="left:1011px;top:57.5px;font-size:13px;color:#000000;font-weight:400;font-family:'Liberation Sans', sans-serif;">db</div>
<svg class="r" style="left:974px;top:73px;" width="10" height="8" viewBox="0 0 10 8"><path d="M1 1.5L5 5.5L9 1.5" stroke="#a2a2a2" stroke-width="1.6" fill="none"/></svg>
<svg class="r" style="left:994px;top:71px;" width="15" height="14" viewBox="0 0 15 14"><path d="M0 1.2H5.2L6.6 2.8H14V12H0Z" fill="#9aa7b0"/></svg>
<div class="t" style="left:1011px;top:78.5px;font-size:13px;color:#000000;font-weight:400;font-family:'Liberation Sans', sans-serif;">src</div>
<svg class="r" style="left:994px;top:94px;" width="10" height="8" viewBox="0 0 10 8"><path d="M1 1.5L5 5.5L9 1.5" stroke="#a2a2a2" stroke-width="1.6" fill="none"/></svg>
<svg class="r" style="left:1014px;top:92px;" width="15" height="14" viewBox="0 0 15 14"><path d="M0 1.2H5.2L6.6 2.8H14V12H0Z" fill="#9aa7b0"/></svg>
<div class="t" style="left:1031px;top:99.5px;font-size:13px;color:#000000;font-weight:400;font-family:'Liberation Sans', sans-serif;">main</div>
<svg class="r" style="left:1015px;top:114px;" width="8" height="10" viewBox="0 0 8 10"><path d="M1.5 1L5.5 5L1.5 9" stroke="#a2a2a2" stroke-width="1.6" fill="none"/></svg>
<svg class="r" style="left:1034px;top:113px;" width="15" height="14" viewBox="0 0 15 14"><path d="M0 1.2H5.2L6.6 2.8H14V12H0Z" fill="#62b8de"/></svg>
<div class="t" style="left:1051px;top:120.5px;font-size:13px;color:#000000;font-weight:400;font-family:'Liberation Sans', sans-serif;">java</div>
<svg class="r" style="left:1014px;top:136px;" width="10" height="8" viewBox="0 0 10 8"><path d="M1 1.5L5 5.5L9 1.5" stroke="#a2a2a2" stroke-width="1.6" fill="none"/></svg>
<svg class="r" style="left:1034px;top:134px;" width="15" height="14" viewBox="0 0 15 14"><path d="M0 1.2H5.2L6.6 2.8H14V12H0Z" fill="#9aa7b0"/><rect x="8" y="7" width="7" height="7" fill="#ffffff"/><path d="M9 8.5H14M9 10.5H14M9 12.5H14" stroke="#d4b84a" stroke-width="1"/></svg>
<div class="t" style="left:1051px;top:141.5px;font-size:13px;color:#000000;font-weight:400;font-family:'Liberation Sans', sans-serif;">resources</div>
<svg class="r" style="left:1035px;top:156px;" width="8" height="10" viewBox="0 0 8 10"><path d="M1.5 1L5.5 5L1.5 9" stroke="#a2a2a2" stroke-width="1.6" fill="none"/></svg>
<svg class="r" style="left:1054px;top:155px;" width="15" height="14" viewBox="0 0 15 14"><path d="M0 1.2H5.2L6.6 2.8H14V12H0Z" fill="#9aa7b0"/><rect x="6.5" y="5.5" width="4" height="4" fill="#ffffff" opacity="0.85"/></svg>
<div class="t" style="left:1071px;top:162.5px;font-size:13px;color:#000000;font-weight:400;font-family:'Liberation Sans', sans-serif;">front.front</div>
<svg class="r" style="left:1035px;top:177px;" width="8" height="10" viewBox="0 0 8 10"><path d="M1.5 1L5.5 5L1.5 9" stroke="#a2a2a2" stroke-width="1.6" fill="none"/></svg>
<svg class="r" style="left:1054px;top:176px;" width="15" height="14" viewBox="0 0 15 14"><path d="M0 1.2H5.2L6.6 2.8H14V12H0Z" fill="#9aa7b0"/><rect x="6.5" y="5.5" width="4" height="4" fill="#ffffff" opacity="0.85"/></svg>
<div class="t" style="left:1071px;top:183.5px;font-size:13px;color:#000000;font-weight:400;font-family:'Liberation Sans', sans-serif;">mapper</div>
<svg class="r" style="left:1035px;top:198px;" width="8" height="10" viewBox="0 0 8 10"><path d="M1.5 1L5.5 5L1.5 9" stroke="#a2a2a2" stroke-width="1.6" fill="none"/></svg>
<svg class="r" style="left:1054px;top:197px;" width="15" height="14" viewBox="0 0 15 14"><path d="M0 1.2H5.2L6.6 2.8H14V12H0Z" fill="#9aa7b0"/><rect x="6.5" y="5.5" width="4" height="4" fill="#ffffff" opacity="0.85"/></svg>
<div class="t" style="left:1071px;top:204.5px;font-size:13px;color:#000000;font-weight:400;font-family:'Liberation Sans', sans-serif;">static.upload</div>
<svg class="r" style="left:1053px;top:218px;" width="16" height="15" viewBox="0 0 16 15"><path d="M2 9C2 5 5 2.5 10 2.5C9 4 8.5 5 9 6.5C6 6.5 4 7.5 2 9Z" fill="#6cb36c"/><circle cx="10" cy="10" r="4.3" fill="#5a9bd0" stroke="#ffffff" stroke-width="0.8"/><path d="M8 10.2A2 2 0 1 0 10 8.2" stroke="#ffffff" stroke-width="1" fill="none"/></svg>
<div class="t" style="left:1071px;top:225.5px;font-size:13px;color:#ffffff;font-weight:400;font-family:'Liberation Sans', sans-serif;">application.yml</div>
<svg class="r" style="left:995px;top:240px;" width="8" height="10" viewBox="0 0 8 10"><path d="M1.5 1L5.5 5L1.5 9" stroke="#a2a2a2" stroke-width="1.6" fill="none"/></svg>
<svg class="r" style="left:1014px;top:239px;" width="15" height="14" viewBox="0 0 15 14"><path d="M0 1.2H5.2L6.6 2.8H14V12H0Z" fill="#9aa7b0"/></svg>
<div class="t" style="left:1031px;top:246.5px;font-size:13px;color:#000000;font-weight:400;font-family:'Liberation Sans', sans-serif;">test</div>
<svg class="r" style="left:975px;top:261px;" width="8" height="10" viewBox="0 0 8 10"><path d="M1.5 1L5.5 5L1.5 9" stroke="#a2a2a2" stroke-width="1.6" fill="none"/></svg>
<svg class="r" style="left:994px;top:260px;" width="15" height="14" viewBox="0 0 15 14"><path d="M0 1.2H5.2L6.6 2.8H14V12H0Z" fill="#f4a05a"/></svg>
<div class="t" style="left:1011px;top:267.5px;font-size:13px;color:#000000;font-weight:400;font-family:'Liberation Sans', sans-serif;">target</div>
<svg class="r" style="left:994px;top:281px;" width="14" height="14" viewBox="0 0 14 14"><circle cx="7" cy="7" r="6.3" fill="#2c2255"/><path d="M1 5.5H13M0.8 8.5H13.2" stroke="#ffffff" stroke-width="1.1"/><path d="M2.5 3.5A6 6 0 0 1 11.5 3.5" stroke="#f7941e" stroke-width="0.8" fill="none"/></svg>
<div class="t" style="left:1011px;top:288.5px;font-size:13px;color:#000000;font-weight:400;font-family:'Liberation Sans', sans-serif;">.classpath</div>
<svg class="r" style="left:995px;top:302px;" width="12" height="14" viewBox="0 0 12 14"><path d="M0.5 0.5H8L11.5 4V13.5H0.5Z" fill="#9aa7b0"/><path d="M2.5 5H9.5M2.5 7.5H9.5M2.5 10H9.5" stroke="#ffffff" stroke-width="1"/></svg>
<div class="t" style="left:1011px;top:309.5px;font-size:13px;color:#000000;font-weight:400;font-family:'Liberation Sans', sans-serif;">.factorypath</div>
<svg class="r" style="left:995px;top:323px;" width="14" height="15" viewBox="0 0 14 15"><path d="M0.5 0.5H7L10 3.5V12.5H0.5Z" fill="#9aa7b0"/><circle cx="9" cy="10.5" r="3.3" fill="#ffffff" stroke="#6e6e6e" stroke-width="1.1"/><path d="M6.8 12.7L11.2 8.3" stroke="#6e6e6e" stroke-width="1.1"/></svg>
<div class="t" style="left:1011px;top:330.5px;font-size:13px;color:#000000;font-weight:400;font-family:'Liberation Sans', sans-serif;">.gitignore</div>
<svg class="r" style="left:994px;top:344px;" width="14" height="14" viewBox="0 0 14 14"><circle cx="7" cy="7" r="6.3" fill="#2c2255"/><path d="M1 5.5H13M0.8 8.5H13.2" stroke="#ffffff" stroke-width="1.1"/><path d="M2.5 3.5A6 6 0 0 1 11.5 3.5" stroke="#f7941e" stroke-width="0.8" fill="none"/></svg>
<div class="t" style="left:1011px;top:351.5px;font-size:13px;color:#000000;font-weight:400;font-family:'Liberation Sans', sans-serif;">.project</div>
<svg class="r" style="left:995px;top:366px;" width="14" height="12" viewBox="0 0 14 12"><rect x="0.5" y="0.5" width="12" height="11" fill="#9aa7b0"/><path d="M3.5 3.5L6.5 6L3.5 8.5" stroke="#ffffff" stroke-width="1.3" fill="none"/></svg>
<div class="t" style="left:1011px;top:372.5px;font-size:13px;color:#000000;font-weight:400;font-family:'Liberation Sans', sans-serif;">mvnw</div>
<svg class="r" style="left:995px;top:386px;" width="12" height="14" viewBox="0 0 12 14"><path d="M0.5 0.5H8L11.5 4V13.5H0.5Z" fill="#9aa7b0"/><path d="M2.5 5H9.5M2.5 7.5H9.5M2.5 10H9.5" stroke="#ffffff" stroke-width="1"/></svg>
<div class="t" style="left:1011px;top:393.5px;font-size:13px;color:#000000;font-weight:400;font-family:'Liberation Sans', sans-serif;">mvnw.cmd</div>
<div class="t" style="left:994px;top:413.11px;font-size:17px;color:#5fb8cf;font-weight:700;font-family:'Liberation Sans', sans-serif;font-style:italic">m</div>
<div class="t" style="left:1011px;top:414.5px;font-size:13px;color:#000000;font-weight:400;font-family:'Liberation Sans', sans-serif;">pom.xml</div>
<svg class="r" style="left:995px;top:427px;" width="14" height="16" viewBox="0 0 14 16"><path d="M1.5 0.5H8L11 3.5V8H1.5Z" fill="#9aa7b0"/><rect x="0" y="8" width="14" height="7" fill="#e07a4a"/><path d="M4.5 9.5L2.5 11.5L4.5 13.5M9.5 9.5L11.5 11.5L9.5 13.5" stroke="#ffffff" stroke-width="1" fill="none"/></svg>
<div class="t" style="left:1011px;top:435.5px;font-size:13px;color:#000000;font-weight:400;font-family:'Liberation Sans', sans-serif;">pom-war.xml</div>
<svg class="r" style="left:995px;top:449px;" width="14" height="15" viewBox="0 0 14 15"><path d="M0.5 0.5H7L10 3.5V12.5H0.5Z" fill="#9aa7b0"/><rect x="7" y="8.5" width="6" height="6" fill="#000000"/></svg>
<div class="t" style="left:1011px;top:456.5px;font-size:13px;color:#000000;font-weight:400;font-family:'Liberation Sans', sans-serif;">springboot7z60r.iml</div>
<svg class="r" style="left:955px;top:471px;" width="8" height="10" viewBox="0 0 8 10"><path d="M1.5 1L5.5 5L1.5 9" stroke="#a2a2a2" stroke-width="1.6" fill="none"/></svg>
<svg class="r" style="left:973px;top:470px;" width="18" height="14" viewBox="0 0 18 14"><path d="M1.5 2V13M4.5 2V13M7.5 4V13M10.5 2V13M13.5 4V13M16.5 2V13" stroke="#8e8e8e" stroke-width="1.6"/><path d="M7.5 2V13" stroke="#62b543" stroke-width="1.6"/></svg>
<div class="t" style="left:991px;top:477.5px;font-size:13px;color:#000000;font-weight:400;font-family:'Liberation Sans', sans-serif;">External Libraries</div>
<svg class="r" style="left:973px;top:490px;" width="19" height="18" viewBox="0 0 19 18"><path d="M1 1H10V11H1Z" fill="#9aa7b0"/><path d="M2.5 9L8.5 3" stroke="#ffffff" stroke-width="1.2"/><circle cx="12.5" cy="11.5" r="5.5" fill="#40a8c8"/><path d="M12.5 8.5V11.5H14.8" stroke="#ffffff" stroke-width="1.1" fill="none"/></svg>
<div class="t" style="left:991px;top:498.5px;font-size:13px;color:#000000;font-weight:400;font-family:'Liberation Sans', sans-serif;">Scratches and Consoles</div>
<div class="r" style="left:1265px;top:0px;width:1px;height:600px;background:#d1d1d1;"></div>
<div class="r" style="left:1266px;top:0px;width:618px;height:576px;background:#ffffff;"></div>
<div class="r" style="left:1266px;top:243px;width:618px;height:20px;background:#fcfae6;"></div>
<div class="r" style="left:1266px;top:0px;width:55px;height:576px;background:#f0f0f0;"></div>
<div class="r" style="left:1266px;top:243px;width:55px;height:20px;background:#f5f2e3;"></div>
<div class="r" style="left:1321px;top:0px;width:1px;height:576px;background:#e3e3e3;"></div>
<div class="clip" style="left:1266px;top:0;width:618px;height:576px">
<div class="r" style="left:61px;top:563px;width:220px;height:20px;background:#e4e4e4"></div>
<div class="r" style="left:91px;top:44px;width:1px;height:20px;background:#e6e6e6"></div>
<div class="r" style="left:91px;top:103px;width:1px;height:20px;background:#e6e6e6"></div>
<div class="r" style="left:91px;top:183px;width:1px;height:80px;background:#e6e6e6"></div>
<div class="r" style="left:105px;top:423px;width:1px;height:40px;background:#e6e6e6"></div>
<div class="r" style="left:91px;top:403px;width:1px;height:100px;background:#e6e6e6"></div>
<div class="t" style="left:11.5px;top:-6.28px;font-size:12.3px;font-family:'Liberation Mono', monospace;color:#a6a6a6;letter-spacing:-0.38px;">1</div>
<div class="t" style="left:11.5px;top:13.72px;font-size:12.3px;font-family:'Liberation Mono', monospace;color:#a6a6a6;letter-spacing:-0.38px;">2</div>
<div class="t" style="left:61.5px;top:13.72px;font-size:12.3px;font-family:'Liberation Mono', monospace;letter-spacing:-0.38px;"><span style="color:#000080;font-weight:700">server</span><span style="color:#000000">:</span></div>
<div class="t" style="left:11.5px;top:33.72px;font-size:12.3px;font-family:'Liberation Mono', monospace;color:#a6a6a6;letter-spacing:-0.38px;">3</div>
<div class="t" style="left:61.5px;top:33.72px;font-size:12.3px;font-family:'Liberation Mono', monospace;letter-spacing:-0.38px;"><span style="color:#000080;font-weight:700">    tomcat</span><span style="color:#000000">:</span></div>
<div class="t" style="left:11.5px;top:53.72px;font-size:12.3px;font-family:'Liberation Mono', monospace;color:#a6a6a6;letter-spacing:-0.38px;">4</div>
<div class="t" style="left:61.5px;top:53.72px;font-size:12.3px;font-family:'Liberation Mono', monospace;letter-spacing:-0.38px;"><span style="color:#000080;font-weight:700">        uri-encoding</span><span style="color:#000000">: UTF-8</span></div>
<div class="t" style="left:11.5px;top:73.72px;font-size:12.3px;font-family:'Liberation Mono', monospace;color:#a6a6a6;letter-spacing:-0.38px;">5</div>
<div class="t" style="left:61.5px;top:73.72px;font-size:12.3px;font-family:'Liberation Mono', monospace;letter-spacing:-0.38px;"><span style="color:#000080;font-weight:700">    port</span><span style="color:#000000">: </span><span style="color:#2b2b9c">8080</span></div>
<div class="t" style="left:11.5px;top:93.72px;font-size:12.3px;font-family:'Liberation Mono', monospace;color:#a6a6a6;letter-spacing:-0.38px;">6</div>
<div class="t" style="left:61.5px;top:93.72px;font-size:12.3px;font-family:'Liberation Mono', monospace;letter-spacing:-0.38px;"><span style="color:#000080;font-weight:700">    servlet</span><span style="color:#000000">:</span></div>
<div class="t" style="left:11.5px;top:113.72px;font-size:12.3px;font-family:'Liberation Mono', monospace;color:#a6a6a6;letter-spacing:-0.38px;">7</div>
<div class="t" style="left:61.5px;top:113.72px;font-size:12.3px;font-family:'Liberation Mono', monospace;letter-spacing:-0.38px;"><span style="color:#000080;font-weight:700">        context-path</span><span style="color:#000000">: /springboot7z60r</span></div>
<div class="t" style="left:11.5px;top:133.72px;font-size:12.3px;font-family:'Liberation Mono', monospace;color:#a6a6a6;letter-spacing:-0.38px;">8</div>
<div class="t" style="left:11.5px;top:153.72px;font-size:12.3px;font-family:'Liberation Mono', monospace;color:#a6a6a6;letter-spacing:-0.38px;">9</div>
<div class="t" style="left:61.5px;top:153.72px;font-size:12.3px;font-family:'Liberation Mono', monospace;letter-spacing:-0.38px;"><span style="color:#000080;font-weight:700">spring</span><span style="color:#000000">:</span></div>
<div class="t" style="left:4.5px;top:173.72px;font-size:12.3px;font-family:'Liberation Mono', monospace;color:#a6a6a6;letter-spacing:-0.38px;">10</div>
<div class="t" style="left:61.5px;top:173.72px;font-size:12.3px;font-family:'Liberation Mono', monospace;letter-spacing:-0.38px;"><span style="color:#000080;font-weight:700">    datasource</span><span style="color:#000000">:</span></div>
<div class="t" style="left:4.5px;top:193.72px;font-size:12.3px;font-family:'Liberation Mono', monospace;color:#a6a6a6;letter-spacing:-0.38px;">11</div>
<div class="t" style="left:61.5px;top:193.72px;font-size:12.3px;font-family:'Liberation Mono', monospace;letter-spacing:-0.38px;"><span style="color:#000080;font-weight:700">        driverClassName</span><span style="color:#000000">: com.mysql.jdbc.Driver</span></div>
<div class="t" style="left:4.5px;top:213.72px;font-size:12.3px;font-family:'Liberation Mono', monospace;color:#a6a6a6;letter-spacing:-0.38px;">12</div>
<div class="t" style="left:61.5px;top:213.72px;font-size:12.3px;font-family:'Liberation Mono', monospace;letter-spacing:-0.38px;"><span style="color:#000080;font-weight:700">        url</span><span style="color:#000000">: jdbc:mysql://127.0.0.1:3306/springboot7z60r1991?useUnicode=true&amp;characterEncoding=utf-8</span></div>
<div class="t" style="left:4.5px;top:233.72px;font-size:12.3px;font-family:'Liberation Mono', monospace;color:#a6a6a6;letter-spacing:-0.38px;">13</div>
<div class="t" style="left:61.5px;top:233.72px;font-size:12.3px;font-family:'Liberation Mono', monospace;letter-spacing:-0.38px;"><span style="color:#000080;font-weight:700">        username</span><span style="color:#000000">: root</span></div>
<div class="t" style="left:4.5px;top:253.72px;font-size:12.3px;font-family:'Liberation Mono', monospace;color:#a6a6a6;letter-spacing:-0.38px;">14</div>
<div class="t" style="left:61.5px;top:253.72px;font-size:12.3px;font-family:'Liberation Mono', monospace;letter-spacing:-0.38px;"><span style="color:#000080;font-weight:700">        password</span><span style="color:#000000">: root</span></div>
<div class="t" style="left:4.5px;top:273.72px;font-size:12.3px;font-family:'Liberation Mono', monospace;color:#a6a6a6;letter-spacing:-0.38px;">15</div>
<div class="t" style="left:4.5px;top:293.72px;font-size:12.3px;font-family:'Liberation Mono', monospace;color:#a6a6a6;letter-spacing:-0.38px;">16</div>
<div class="t" style="left:61.5px;top:293.72px;font-size:12.3px;font-family:'Liberation Mono', monospace;letter-spacing:-0.38px;"><span style="color:#8c8c8c;font-style:italic">#        driverClassName: com.microsoft.sqlserver.jdbc.SQLServerDriver</span></div>
<div class="t" style="left:4.5px;top:313.72px;font-size:12.3px;font-family:'Liberation Mono', monospace;color:#a6a6a6;letter-spacing:-0.38px;">17</div>
<div class="t" style="left:61.5px;top:313.72px;font-size:12.3px;font-family:'Liberation Mono', monospace;letter-spacing:-0.38px;"><span style="color:#8c8c8c;font-style:italic">#        url: jdbc:sqlserver://127.0.0.1:1433;DatabaseName=springboot7z60r</span></div>
<div class="t" style="left:4.5px;top:333.72px;font-size:12.3px;font-family:'Liberation Mono', monospace;color:#a6a6a6;letter-spacing:-0.38px;">18</div>
<div class="t" style="left:61.5px;top:333.72px;font-size:12.3px;font-family:'Liberation Mono', monospace;letter-spacing:-0.38px;"><span style="color:#8c8c8c;font-style:italic">#        username: sa</span></div>
<div class="t" style="left:4.5px;top:353.72px;font-size:12.3px;font-family:'Liberation Mono', monospace;color:#a6a6a6;letter-spacing:-0.38px;">19</div>
<div class="t" style="left:61.5px;top:353.72px;font-size:12.3px;font-family:'Liberation Mono', monospace;letter-spacing:-0.38px;"><span style="color:#8c8c8c;font-style:italic">#        password: 123456</span></div>
<div class="t" style="left:4.5px;top:373.72px;font-size:12.3px;font-family:'Liberation Mono', monospace;color:#a6a6a6;letter-spacing:-0.38px;">20</div>
<div class="t" style="left:4.5px;top:393.72px;font-size:12.3px;font-family:'Liberation Mono', monospace;color:#a6a6a6;letter-spacing:-0.38px;">21</div>
<div class="t" style="left:61.5px;top:393.72px;font-size:12.3px;font-family:'Liberation Mono', monospace;letter-spacing:-0.38px;"><span style="color:#000080;font-weight:700">    servlet</span><span style="color:#000000">:</span></div>
<div class="t" style="left:4.5px;top:413.72px;font-size:12.3px;font-family:'Liberation Mono', monospace;color:#a6a6a6;letter-spacing:-0.38px;">22</div>
<div class="t" style="left:61.5px;top:413.72px;font-size:12.3px;font-family:'Liberation Mono', monospace;letter-spacing:-0.38px;"><span style="color:#000080;font-weight:700">      multipart</span><span style="color:#000000">:</span></div>
<div class="t" style="left:4.5px;top:433.72px;font-size:12.3px;font-family:'Liberation Mono', monospace;color:#a6a6a6;letter-spacing:-0.38px;">23</div>
<div class="t" style="left:61.5px;top:433.72px;font-size:12.3px;font-family:'Liberation Mono', monospace;letter-spacing:-0.38px;"><span style="color:#000080;font-weight:700">        max-file-size</span><span style="color:#000000">: 10MB</span></div>
<div class="t" style="left:4.5px;top:453.72px;font-size:12.3px;font-family:'Liberation Mono', monospace;color:#a6a6a6;letter-spacing:-0.38px;">24</div>
<div class="t" style="left:61.5px;top:453.72px;font-size:12.3px;font-family:'Liberation Mono', monospace;letter-spacing:-0.38px;"><span style="color:#000080;font-weight:700">        max-request-size</span><span style="color:#000000">: 10MB</span></div>
<div class="t" style="left:4.5px;top:473.72px;font-size:12.3px;font-family:'Liberation Mono', monospace;color:#a6a6a6;letter-spacing:-0.38px;">25</div>
<div class="t" style="left:61.5px;top:473.72px;font-size:12.3px;font-family:'Liberation Mono', monospace;letter-spacing:-0.38px;"><span style="color:#000080;font-weight:700">    resources</span><span style="color:#000000">:</span></div>
<div class="t" style="left:4.5px;top:493.72px;font-size:12.3px;font-family:'Liberation Mono', monospace;color:#a6a6a6;letter-spacing:-0.38px;">26</div>
<div class="t" style="left:61.5px;top:493.72px;font-size:12.3px;font-family:'Liberation Mono', monospace;letter-spacing:-0.38px;"><span style="color:#000080;font-weight:700">      static-locations</span><span style="color:#000000">: classpath:static/,file:static/</span></div>
<div class="t" style="left:4.5px;top:513.72px;font-size:12.3px;font-family:'Liberation Mono', monospace;color:#a6a6a6;letter-spacing:-0.38px;">27</div>
<div class="t" style="left:4.5px;top:533.72px;font-size:12.3px;font-family:'Liberation Mono', monospace;color:#a6a6a6;letter-spacing:-0.38px;">28</div>
<div class="t" style="left:61.5px;top:533.72px;font-size:12.3px;font-family:'Liberation Mono', monospace;letter-spacing:-0.38px;"><span style="color:#8c8c8c;font-style:italic">#mybatis</span></div>
<div class="t" style="left:4.5px;top:553.72px;font-size:12.3px;font-family:'Liberation Mono', monospace;color:#a6a6a6;letter-spacing:-0.38px;">29</div>
<div class="t" style="left:61.5px;top:553.72px;font-size:12.3px;font-family:'Liberation Mono', monospace;letter-spacing:-0.38px;"><span style="color:#000080;font-weight:700">mybatis-plus</span><span style="color:#000000">:</span></div>
<div class="t" style="left:4.5px;top:573.72px;font-size:12.3px;font-family:'Liberation Mono', monospace;color:#a6a6a6;letter-spacing:-0.38px;">30</div>
<div class="t" style="left:61.5px;top:573.72px;font-size:12.3px;font-family:'Liberation Mono', monospace;letter-spacing:-0.38px;"><span style="color:#000080;font-weight:700">  mapper-locations</span><span style="color:#000000">: classpath*:mapper/*.xml</span></div>
<svg class="r" style="left:50px;top:7px" width="10" height="11" viewBox="0 0 10 11"><path d="M1 1H9V6.5L5 10L1 6.5Z" fill="#ffffff" stroke="#b8b8b8" stroke-width="0.9"/><path d="M3 5.5H7" stroke="#9a9a9a" stroke-width="0.9"/></svg>
<svg class="r" style="left:50px;top:27px" width="10" height="11" viewBox="0 0 10 11"><path d="M1 1H9V6.5L5 10L1 6.5Z" fill="#ffffff" stroke="#b8b8b8" stroke-width="0.9"/><path d="M3 5.5H7" stroke="#9a9a9a" stroke-width="0.9"/></svg>
<svg class="r" style="left:50px;top:47px" width="10" height="11" viewBox="0 0 10 11"><path d="M1 10H9V4.5L5 1L1 4.5Z" fill="#ffffff" stroke="#b8b8b8" stroke-width="0.9"/><path d="M3 5.5H7" stroke="#9a9a9a" stroke-width="0.9"/></svg>
<svg class="r" style="left:50px;top:87px" width="10" height="11" viewBox="0 0 10 11"><path d="M1 1H9V6.5L5 10L1 6.5Z" fill="#ffffff" stroke="#b8b8b8" stroke-width="0.9"/><path d="M3 5.5H7" stroke="#9a9a9a" stroke-width="0.9"/></svg>
<svg class="r" style="left:50px;top:107px" width="10" height="11" viewBox="0 0 10 11"><path d="M1 10H9V4.5L5 1L1 4.5Z" fill="#ffffff" stroke="#b8b8b8" stroke-width="0.9"/><path d="M3 5.5H7" stroke="#9a9a9a" stroke-width="0.9"/></svg>
<svg class="r" style="left:50px;top:147px" width="10" height="11" viewBox="0 0 10 11"><path d="M1 1H9V6.5L5 10L1 6.5Z" fill="#ffffff" stroke="#b8b8b8" stroke-width="0.9"/><path d="M3 5.5H7" stroke="#9a9a9a" stroke-width="0.9"/></svg>
<svg class="r" style="left:50px;top:167px" width="10" height="11" viewBox="0 0 10 11"><path d="M1 1H9V6.5L5 10L1 6.5Z" fill="#ffffff" stroke="#b8b8b8" stroke-width="0.9"/><path d="M3 5.5H7" stroke="#9a9a9a" stroke-width="0.9"/></svg>
<svg class="r" style="left:50px;top:247px" width="10" height="11" viewBox="0 0 10 11"><path d="M1 10H9V4.5L5 1L1 4.5Z" fill="#ffffff" stroke="#b8b8b8" stroke-width="0.9"/><path d="M3 5.5H7" stroke="#9a9a9a" stroke-width="0.9"/></svg>
<svg class="r" style="left:50px;top:387px" width="10" height="11" viewBox="0 0 10 11"><path d="M1 1H9V6.5L5 10L1 6.5Z" fill="#ffffff" stroke="#b8b8b8" stroke-width="0.9"/><path d="M3 5.5H7" stroke="#9a9a9a" stroke-width="0.9"/></svg>
<svg class="r" style="left:50px;top:407px" width="10" height="11" viewBox="0 0 10 11"><path d="M1 1H9V6.5L5 10L1 6.5Z" fill="#ffffff" stroke="#b8b8b8" stroke-width="0.9"/><path d="M3 5.5H7" stroke="#9a9a9a" stroke-width="0.9"/></svg>
<svg class="r" style="left:50px;top:447px" width="10" height="11" viewBox="0 0 10 11"><path d="M1 10H9V4.5L5 1L1 4.5Z" fill="#ffffff" stroke="#b8b8b8" stroke-width="0.9"/><path d="M3 5.5H7" stroke="#9a9a9a" stroke-width="0.9"/></svg>
<svg class="r" style="left:50px;top:467px" width="10" height="11" viewBox="0 0 10 11"><path d="M1 1H9V6.5L5 10L1 6.5Z" fill="#ffffff" stroke="#b8b8b8" stroke-width="0.9"/><path d="M3 5.5H7" stroke="#9a9a9a" stroke-width="0.9"/></svg>
<svg class="r" style="left:50px;top:487px" width="10" height="11" viewBox="0 0 10 11"><path d="M1 10H9V4.5L5 1L1 4.5Z" fill="#ffffff" stroke="#b8b8b8" stroke-width="0.9"/><path d="M3 5.5H7" stroke="#9a9a9a" stroke-width="0.9"/></svg>
<svg class="r" style="left:50px;top:547px" width="10" height="11" viewBox="0 0 10 11"><path d="M1 1H9V6.5L5 10L1 6.5Z" fill="#ffffff" stroke="#b8b8b8" stroke-width="0.9"/><path d="M3 5.5H7" stroke="#9a9a9a" stroke-width="0.9"/></svg>
</div>
<svg class="r" style="left:1607.5px;top:298px;" width="65" height="3" viewBox="0 0 65 3"><polyline points="0.0,0.6 2.0,2.4 4.0,0.6 6.0,2.4 8.0,0.6 10.0,2.4 12.0,0.6 14.0,2.4 16.0,0.6 18.0,2.4 20.0,0.6 22.0,2.4 24.0,0.6 26.0,2.4 28.0,0.6 30.0,2.4 32.0,0.6 34.0,2.4 36.0,0.6 38.0,2.4 40.0,0.6 42.0,2.4 44.0,0.6 46.0,2.4 48.0,0.6 50.0,2.4 52.0,0.6 54.0,2.4 56.0,0.6 58.0,2.4 60.0,0.6 62.0,2.4" fill="none" stroke="#b8ccb8" stroke-width="0.9"/></svg>
<svg class="r" style="left:1460.5px;top:318px;" width="65" height="3" viewBox="0 0 65 3"><polyline points="0.0,0.6 2.0,2.4 4.0,0.6 6.0,2.4 8.0,0.6 10.0,2.4 12.0,0.6 14.0,2.4 16.0,0.6 18.0,2.4 20.0,0.6 22.0,2.4 24.0,0.6 26.0,2.4 28.0,0.6 30.0,2.4 32.0,0.6 34.0,2.4 36.0,0.6 38.0,2.4 40.0,0.6 42.0,2.4 44.0,0.6 46.0,2.4 48.0,0.6 50.0,2.4 52.0,0.6 54.0,2.4 56.0,0.6 58.0,2.4 60.0,0.6 62.0,2.4" fill="none" stroke="#b8ccb8" stroke-width="0.9"/></svg>
<div class="r" style="left:1874px;top:0px;width:10px;height:290px;background:rgba(0,0,0,0.15);"></div>
<div class="r" style="left:1266px;top:576px;width:618px;height:24px;background:#f2f2f2;"></div>
<div class="r" style="left:1266px;top:576px;width:618px;height:1px;background:#e8e8e8;"></div>
<div class="t" style="left:1331.5px;top:589.1px;font-size:13px;color:#505050;font-weight:400;font-family:'Liberation Sans', sans-serif;">Document 1/1</div>
<svg class="r" style="left:0px;top:584px;" width="0" height="0" viewBox="0 0 0 0"></svg>
<div class="t" style="left:1437px;top:589.1px;font-size:13px;color:#505050;font-weight:400;font-family:'Liberation Sans', sans-serif;">spring:</div>
<svg class="r" style="left:1425px;top:584px;" width="0" height="0" viewBox="0 0 0 0"></svg>
<div class="t" style="left:1501px;top:589.1px;font-size:13px;color:#505050;font-weight:400;font-family:'Liberation Sans', sans-serif;">datasource:</div>
<svg class="r" style="left:1489px;top:584px;" width="0" height="0" viewBox="0 0 0 0"></svg>
<div class="t" style="left:1591px;top:589.1px;font-size:13px;color:#505050;font-weight:400;font-family:'Liberation Sans', sans-serif;">password:</div>
<svg class="r" style="left:1579px;top:584px;" width="0" height="0" viewBox="0 0 0 0"></svg>
<div class="t" style="left:1677px;top:589.1px;font-size:13px;color:#505050;font-weight:400;font-family:'Liberation Sans', sans-serif;">root</div>
<svg class="r" style="left:1426px;top:585px;" width="6" height="10" viewBox="0 0 6 10"><path d="M1 1L4.5 5L1 9" stroke="#a0a0a0" stroke-width="1" fill="none"/></svg>
<svg class="r" style="left:1490px;top:585px;" width="6" height="10" viewBox="0 0 6 10"><path d="M1 1L4.5 5L1 9" stroke="#a0a0a0" stroke-width="1" fill="none"/></svg>
<svg class="r" style="left:1580px;top:585px;" width="6" height="10" viewBox="0 0 6 10"><path d="M1 1L4.5 5L1 9" stroke="#a0a0a0" stroke-width="1" fill="none"/></svg>
<svg class="r" style="left:1665px;top:585px;" width="6" height="10" viewBox="0 0 6 10"><path d="M1 1L4.5 5L1 9" stroke="#a0a0a0" stroke-width="1" fill="none"/></svg>
<div class="r" style="left:951px;top:600px;width:933px;height:1px;background:#c9c9c9;"></div>
<div class="r" style="left:951px;top:601px;width:933px;height:26px;background:#f2f2f2;"></div>
<div class="t" style="left:957px;top:614.5px;font-size:13px;color:#444444;font-weight:400;font-family:'Liberation Sans', sans-serif;">Run:</div>
<svg class="r" style="left:1002px;top:606px;" width="18" height="17" viewBox="0 0 18 17"><path d="M1 11C1 6 4.5 3 11 2C9.5 4 9 6 9.8 8C6 8 3.5 9 1 11Z" fill="#6cb36c"/><circle cx="11.5" cy="11" r="4.8" fill="#6cb36c" stroke="#f2f2f2" stroke-width="0.8"/><path d="M9.5 11.2A2.1 2.1 0 1 0 11.5 9" stroke="#ffffff" stroke-width="1" fill="none"/><path d="M13 13L16.5 16.5" stroke="#3a9a3a" stroke-width="1.2"/></svg>
<div class="t" style="left:1021px;top:614.5px;font-size:13px;color:#000000;font-weight:400;font-family:'Liberation Sans', sans-serif;">SpringbootSchemaApplication</div>
<svg class="r" style="left:1203px;top:609px;" width="10" height="10" viewBox="0 0 10 10"><path d="M2 2L8 8M8 2L2 8" stroke="#c0c0c0" stroke-width="1.1"/></svg>
<div class="r" style="left:990px;top:624px;width:233px;height:3px;background:#a0aab4;"></div>
<svg class="r" style="left:1837px;top:606px;" width="16" height="16" viewBox="0 0 16 16"><circle cx="8" cy="8" r="2.3" fill="none" stroke="#6e6e6e" stroke-width="1.6"/><path d="M8 1.2V3.5M8 12.5V14.8M1.2 8H3.5M12.5 8H14.8M3.2 3.2L4.8 4.8M11.2 11.2L12.8 12.8M3.2 12.8L4.8 11.2M11.2 4.8L12.8 3.2" stroke="#6e6e6e" stroke-width="2.4"/><circle cx="8" cy="8" r="4.4" fill="none" stroke="#6e6e6e" stroke-width="1.8"/></svg>
<svg class="r" style="left:1864px;top:610px;" width="14" height="6" viewBox="0 0 14 6"><path d="M1 3H13" stroke="#6e6e6e" stroke-width="1.3"/></svg>
<div class="r" style="left:951px;top:627px;width:933px;height:1px;background:#d1d1d1;"></div>
<div class="r" style="left:951px;top:628px;width:28px;height:267px;background:#f2f2f2;"></div>
<div class="r" style="left:979px;top:628px;width:1px;height:267px;background:#d1d1d1;"></div>
<div class="r" style="left:980px;top:628px;width:904px;height:27px;background:#f2f2f2;"></div>
<div class="r" style="left:980px;top:654px;width:904px;height:1px;background:#c9c9c9;"></div>
<div class="r" style="left:980px;top:653px;width:80px;height:2px;background:#a0aab4;"></div>
<svg class="r" style="left:993px;top:635px;" width="14" height="13" viewBox="0 0 14 13"><rect x="0.5" y="0.5" width="13" height="12" fill="#5e5e5e"/><path d="M4 3.5L7 6.5L4 9.5" stroke="#ffffff" stroke-width="1.5" fill="none"/></svg>
<div class="t" style="left:1011px;top:641.67px;font-size:12.5px;color:#1a1a1a;font-weight:400;font-family:'Liberation Sans', sans-serif;letter-spacing:-0.45px">Console</div>
<svg class="r" style="left:1073px;top:632px;" width="16" height="17" viewBox="0 0 16 17"><circle cx="9" cy="3" r="2.2" fill="#e8844f"/><circle cx="3" cy="13" r="2.2" fill="#e8844f"/><circle cx="14" cy="13.5" r="2.2" fill="#e8844f"/><path d="M9 3L3 13M9 3L14 13.5" stroke="#e8844f" stroke-width="1.3"/></svg>
<div class="t" style="left:1092px;top:641.67px;font-size:12.5px;color:#1a1a1a;font-weight:400;font-family:'Liberation Sans', sans-serif;letter-spacing:-0.45px">Endpoints</div>
<div class="r" style="left:980px;top:655px;width:29px;height:240px;background:#f2f2f2;"></div>
<div class="r" style="left:1009px;top:655px;width:865px;height:240px;background:#ffffff;"></div>
<svg class="r" style="left:957px;top:634px;" width="16" height="16" viewBox="0 0 16 16"><path d="M12.5 9.5A5.2 5.2 0 1 1 10.5 3.6" stroke="#59a869" stroke-width="2" fill="none"/><path d="M9 0.5L14.5 3.5L9.5 7.5Z" fill="#59a869"/><rect x="8.5" y="9.5" width="6" height="6" fill="#5e5e5e"/></svg>
<div class="r" style="left:960px;top:663px;width:10px;height:10px;background:#e05555;"></div>
<svg class="r" style="left:958px;top:687px;" width="15" height="15" viewBox="0 0 15 15"><path d="M12.2 9A5 5 0 1 1 10 3" stroke="#6e6e6e" stroke-width="1.8" fill="none"/><path d="M8.5 0.5L13.5 3L9 6.5Z" fill="#6e6e6e"/></svg>
<svg class="r" style="left:957px;top:713px;" width="16" height="14" viewBox="0 0 16 14"><path d="M1 3.5H4.5L6 1.5H10L11.5 3.5H15V13H1Z" fill="#6e6e6e"/><circle cx="8" cy="8" r="3" fill="#f2f2f2"/><circle cx="8" cy="8" r="1.8" fill="#6e6e6e"/></svg>
<svg class="r" style="left:957px;top:738px;" width="16" height="16" viewBox="0 0 16 16"><ellipse cx="7" cy="8.5" rx="3.6" ry="4.6" fill="#59a869"/><path d="M7 3V14M2 6L4 7M2 10H4M2 13.5L4 12M12 6L10 7M12 10H10" stroke="#59a869" stroke-width="1.3"/><path d="M9 9L14.5 14.5M14.5 10.5V14.5H10.5" stroke="#5e5e5e" stroke-width="1.5" fill="none"/></svg>
<svg class="r" style="left:957px;top:764px;" width="16" height="16" viewBox="0 0 16 16"><path d="M6 1.5H14.5V14.5H6" stroke="#e05555" stroke-width="1.4" fill="none"/><path d="M1 8H10M7 5L10 8L7 11" stroke="#5e5e5e" stroke-width="1.5" fill="none"/></svg>
<div class="r" style="left:955px;top:787px;width:20px;height:1px;background:#dcdcdc;"></div>
<svg class="r" style="left:957px;top:798px;" width="16" height="12" viewBox="0 0 16 12"><rect x="0.5" y="0.5" width="6.5" height="5" fill="#6e6e6e"/><rect x="8.5" y="0.5" width="6.5" height="5" fill="#6e6e6e"/><rect x="0.5" y="7" width="14.5" height="4.5" fill="#6e6e6e"/></svg>
<div class="r" style="left:955px;top:821px;width:20px;height:1px;background:#dcdcdc;"></div>
<svg class="r" style="left:958px;top:830px;" width="15" height="15" viewBox="0 0 15 15"><path d="M9 1L14 6L12.5 6.5L10 9.5L10.5 12L3 4.5L5.5 5L8.5 2.5Z" fill="#6e6e6e"/><path d="M6 9L1 14" stroke="#6e6e6e" stroke-width="1.6"/></svg>
<svg class="r" style="left:987px;top:662px;" width="14" height="16" viewBox="0 0 14 16"><path d="M7 14.5V2M2 6.5L7 1.5L12 6.5" stroke="#c0c0c0" stroke-width="1.5" fill="none"/></svg>
<svg class="r" style="left:987px;top:688px;" width="14" height="16" viewBox="0 0 14 16"><path d="M7 1.5V14M2 9.5L7 14.5L12 9.5" stroke="#c0c0c0" stroke-width="1.5" fill="none"/></svg>
<div class="r" style="left:983px;top:711px;width:23px;height:23px;background:#dadada;"></div>
<svg class="r" style="left:986px;top:714px;" width="17" height="17" viewBox="0 0 17 17"><path d="M2 3.5H15M2 8.5H12.5A2.5 2.5 0 0 1 12.5 13.5H8M2 13.5H5M10 11L7.5 13.5L10 16" stroke="#6e6e6e" stroke-width="1.5" fill="none"/></svg>
<div class="r" style="left:983px;top:737px;width:23px;height:23px;background:#dadada;"></div>
<svg class="r" style="left:986px;top:740px;" width="17" height="17" viewBox="0 0 17 17"><path d="M2 3H9M2 7H9M2 11H9M2 15H15M12 2.5V12M9.5 9.5L12 12L14.5 9.5" stroke="#6e6e6e" stroke-width="1.5" fill="none"/></svg>
<svg class="r" style="left:986px;top:767px;" width="16" height="15" viewBox="0 0 16 15"><rect x="3.5" y="0.5" width="9" height="4" fill="#6e6e6e"/><rect x="0.5" y="5" width="15" height="6" rx="1" fill="#6e6e6e"/><rect x="3.5" y="9" width="9" height="5.5" fill="#6e6e6e" stroke="#f2f2f2" stroke-width="1"/></svg>
<svg class="r" style="left:988px;top:793px;" width="13" height="15" viewBox="0 0 13 15"><rect x="0.5" y="2" width="12" height="1.6" fill="#6e6e6e"/><rect x="4" y="0" width="5" height="2" fill="#6e6e6e"/><path d="M1.5 4.5H11.5L10.5 14.5H2.5Z" fill="#6e6e6e"/></svg>
<div class="r" style="left:1874px;top:655px;width:1px;height:240px;background:#ffffff;"></div>
<div class="r" style="left:1874px;top:821px;width:10px;height:74px;background:#e0e0e0;"></div>
<div class="t" style="left:1020.6px;top:664.72px;font-size:12.3px;font-family:'Liberation Mono', monospace;letter-spacing:-0.38px;"><span style="color:#8e2a2a"> driver is automatically registered via the SPI and manual loading of the driver class is generally unnecessary.</span></div>
<div class="t" style="left:1020.6px;top:684.72px;font-size:12.3px;font-family:'Liberation Mono', monospace;letter-spacing:-0.38px;"><span style="color:#000">2025-03-18 12:48:42.767  </span><span style="color:#3cb33c">INFO</span><span style="color:#000"> </span><span style="color:#b03cc8">20360</span><span style="color:#000"> --- [           main] </span><span style="color:#20a8b0">com.zaxxer.hikari.HikariDataSource</span><span style="color:#000">       : HikariPool-1 -</span></div>
<div class="t" style="left:1020.6px;top:704.72px;font-size:12.3px;font-family:'Liberation Mono', monospace;letter-spacing:-0.38px;"><span style="color:#000"> Starting...</span></div>
<div class="t" style="left:1020.6px;top:724.72px;font-size:12.3px;font-family:'Liberation Mono', monospace;letter-spacing:-0.38px;"><span style="color:#000">2025-03-18 12:48:42.787  </span><span style="color:#c8b040">WARN</span><span style="color:#000"> </span><span style="color:#b03cc8">20360</span><span style="color:#000"> --- [           main] </span><span style="color:#20a8b0">com.zaxxer.hikari.util.DriverDataSource</span><span style="color:#000">  : Registered driver</span></div>
<div class="t" style="left:1020.6px;top:744.72px;font-size:12.3px;font-family:'Liberation Mono', monospace;letter-spacing:-0.38px;"><span style="color:#000"> with driverClassName=com.mysql.jdbc.Driver was not found, trying direct instantiation.</span></div>
<div class="t" style="left:1020.6px;top:764.72px;font-size:12.3px;font-family:'Liberation Mono', monospace;letter-spacing:-0.38px;"><span style="color:#000">2025-03-18 12:48:42.860  </span><span style="color:#3cb33c">INFO</span><span style="color:#000"> </span><span style="color:#b03cc8">20360</span><span style="color:#000"> --- [           main] </span><span style="color:#20a8b0">com.zaxxer.hikari.HikariDataSource</span><span style="color:#000">       : HikariPool-1 -</span></div>
<div class="t" style="left:1020.6px;top:784.72px;font-size:12.3px;font-family:'Liberation Mono', monospace;letter-spacing:-0.38px;"><span style="color:#000"> Start completed.</span></div>
<div class="t" style="left:1020.6px;top:804.72px;font-size:12.3px;font-family:'Liberation Mono', monospace;letter-spacing:-0.38px;"><span style="color:#000">2025-03-18 12:48:43.724  </span><span style="color:#3cb33c">INFO</span><span style="color:#000"> </span><span style="color:#b03cc8">20360</span><span style="color:#000"> --- [           main] </span><span style="color:#20a8b0">o.s.b.w.embedded.tomcat.TomcatWebServer</span><span style="color:#000">  : Tomcat started on</span></div>
<div class="t" style="left:1020.6px;top:824.72px;font-size:12.3px;font-family:'Liberation Mono', monospace;letter-spacing:-0.38px;"><span style="color:#000"> port(s): 8080 (http) with context path '/springboot7z60r'</span></div>
<div class="t" style="left:1020.6px;top:844.72px;font-size:12.3px;font-family:'Liberation Mono', monospace;letter-spacing:-0.38px;"><span style="color:#000">2025-03-18 12:48:43.726  </span><span style="color:#3cb33c">INFO</span><span style="color:#000"> </span><span style="color:#b03cc8">20360</span><span style="color:#000"> --- [           main] </span><span style="color:#20a8b0">com.SpringbootSchemaApplication</span><span style="color:#000">          : Started</span></div>
<div class="t" style="left:1020.6px;top:864.72px;font-size:12.3px;font-family:'Liberation Mono', monospace;letter-spacing:-0.38px;"><span style="color:#000"> SpringbootSchemaApplication in 4.481 seconds (JVM running for 5.413)</span></div>
<div class="r" style="left:929px;top:894px;width:976px;height:1px;background:#c9c9c9;"></div>
<div class="r" style="left:929px;top:895px;width:976px;height:21px;background:#f2f2f2;"></div>
<div class="r" style="left:1285px;top:895px;width:69px;height:21px;background:#d9d9d9;"></div>
<svg class="r" style="left:961px;top:900px;" width="13" height="12" viewBox="0 0 13 12"><rect x="0.5" y="0.5" width="12" height="11" fill="#5e5e5e"/><path d="M2.5 3L5 5.5L2.5 8M6 9H10" stroke="#ffffff" stroke-width="1.2" fill="none"/></svg>
<div class="t" style="left:978.5px;top:907.47px;font-size:12.5px;color:#1a1a1a;font-weight:400;font-family:'Liberation Sans', sans-serif;letter-spacing:-0.5px;">Terminal</div>
<svg class="r" style="left:1043px;top:898px;" width="14" height="15" viewBox="0 0 14 15"><path d="M1 5L6 1.5L8.5 4L6.5 6Z" fill="#6e6e6e"/><path d="M6.5 5.5L13 13" stroke="#6e6e6e" stroke-width="2.2"/></svg>
<div class="t" style="left:1060px;top:907.47px;font-size:12.5px;color:#1a1a1a;font-weight:400;font-family:'Liberation Sans', sans-serif;letter-spacing:-0.5px;">Build</div>
<svg class="r" style="left:1108px;top:899px;" width="14" height="14" viewBox="0 0 14 14"><rect x="0.5" y="0.5" width="13" height="13" fill="none" stroke="#6e6e6e" stroke-width="1"/><path d="M3 4H11M3 7H11M3 10H11M5 2V12M8.5 2V12" stroke="#6e6e6e" stroke-width="1"/></svg>
<div class="t" style="left:1124.5px;top:907.47px;font-size:12.5px;color:#1a1a1a;font-weight:400;font-family:'Liberation Sans', sans-serif;letter-spacing:-0.5px;">Java Enterprise</div>
<svg class="r" style="left:1224px;top:899px;" width="15" height="13" viewBox="0 0 15 13"><path d="M1 11C1 5 5 1.5 14 1C12 4 13 10 6 11.5C4 12 2.5 12 1 11Z" fill="#6e6e6e"/></svg>
<div class="t" style="left:1242px;top:907.47px;font-size:12.5px;color:#1a1a1a;font-weight:400;font-family:'Liberation Sans', sans-serif;letter-spacing:-0.5px;">Spring</div>
<svg class="r" style="left:1296px;top:899px;" width="15" height="15" viewBox="0 0 15 15"><path d="M2 1.5L11 7L2 12.5Z" fill="#5e5e5e"/><circle cx="11" cy="11" r="3.5" fill="#59a869"/></svg>
<div class="t" style="left:1311px;top:907.47px;font-size:12.5px;color:#1a1a1a;font-weight:400;font-family:'Liberation Sans', sans-serif;letter-spacing:-0.5px;text-decoration:underline">4</div>
<div class="t" style="left:1318px;top:907.47px;font-size:12.5px;color:#1a1a1a;font-weight:400;font-family:'Liberation Sans', sans-serif;letter-spacing:-0.5px;">: Run</div>
<svg class="r" style="left:1367px;top:900px;" width="14" height="12" viewBox="0 0 14 12"><path d="M1 2H3M5 2H13M1 6H3M5 6H13M1 10H3M5 10H13" stroke="#6e6e6e" stroke-width="1.3"/></svg>
<div class="t" style="left:1382.5px;top:907.47px;font-size:12.5px;color:#1a1a1a;font-weight:400;font-family:'Liberation Sans', sans-serif;letter-spacing:-0.5px;text-decoration:underline">6</div>
<div class="t" style="left:1389.5px;top:907.47px;font-size:12.5px;color:#1a1a1a;font-weight:400;font-family:'Liberation Sans', sans-serif;letter-spacing:-0.5px;">: TODO</div>
<svg class="r" style="left:1804px;top:898px;" width="15" height="15" viewBox="0 0 15 15"><circle cx="7.5" cy="7" r="6" fill="none" stroke="#6e6e6e" stroke-width="1.3"/><path d="M3.5 11.5L2 14L6 12.5" fill="#6e6e6e" stroke="#6e6e6e" stroke-width="1"/></svg>
<div class="t" style="left:1822px;top:907.47px;font-size:12.5px;color:#1a1a1a;font-weight:400;font-family:'Liberation Sans', sans-serif;letter-spacing:-0.5px;">Event Log</div>
<div class="r" style="left:929px;top:916px;width:976px;height:1px;background:#c9c9c9;"></div>
<div class="r" style="left:929px;top:917px;width:976px;height:19px;background:#f2f2f2;"></div>
<svg class="r" style="left:934px;top:919px;" width="14" height="14" viewBox="0 0 14 14"><rect x="3.5" y="0.5" width="10" height="10" fill="none" stroke="#6e6e6e" stroke-width="1"/><path d="M1 3V13H11" stroke="#6e6e6e" stroke-width="1" fill="none"/></svg>
<div class="t" style="left:956px;top:927.0px;font-size:13px;color:#222;font-weight:400;font-family:'Liberation Sans', sans-serif;letter-spacing:0.15px">All files are up-to-date (moments ago)</div>
<div class="t" style="left:1666px;top:927.17px;font-size:12.5px;color:#333;font-weight:400;font-family:'Liberation Sans', sans-serif;">14:22</div>
<div class="t" style="left:1709px;top:927.17px;font-size:12.5px;color:#333;font-weight:400;font-family:'Liberation Sans', sans-serif;letter-spacing:-0.4px">CRLF</div>
<div class="t" style="left:1749px;top:927.17px;font-size:12.5px;color:#333;font-weight:400;font-family:'Liberation Sans', sans-serif;letter-spacing:-0.3px">UTF-8</div>
<div class="t" style="left:1794.5px;top:927.17px;font-size:12.5px;color:#333;font-weight:400;font-family:'Liberation Sans', sans-serif;">2 spaces</div>
<svg class="r" style="left:1857px;top:919px;" width="12" height="14" viewBox="0 0 12 14"><rect x="0.5" y="6" width="9" height="7.5" fill="#6e6e6e"/><path d="M7 6V3.5A2.5 2.5 0 0 1 12 3.5V5" stroke="#6e6e6e" stroke-width="1.3" fill="none"/></svg>
<svg class="r" style="left:1880px;top:919px;" width="15" height="15" viewBox="0 0 15 15"><circle cx="7.5" cy="4.5" r="3.2" fill="#6e6e6e"/><path d="M1.5 14C1.5 10 4 8.5 7.5 8.5C11 8.5 13.5 10 13.5 14Z" fill="#6e6e6e"/><path d="M4.5 4.5H10.5" stroke="#f2f2f2" stroke-width="1"/></svg>
<div class="r" style="left:-14px;top:529px;width:0;height:0;transform:rotate(-29.8deg);transform-origin:0 0">
<div class="t" style="left:0px;top:-8.78px;width:14px;text-align:center;font-size:26px;font-family:'Liberation Serif', serif;color:#ef7ea0;transform:scaleX(0.78)">w</div>
<div class="t" style="left:14px;top:-8.78px;width:14px;text-align:center;font-size:26px;font-family:'Liberation Serif', serif;color:#ef7ea0;transform:scaleX(0.78)">w</div>
<div class="t" style="left:28px;top:-8.78px;width:14px;text-align:center;font-size:26px;font-family:'Liberation Serif', serif;color:#ef7ea0;transform:scaleX(0.78)">w</div>
<div class="t" style="left:42px;top:-8.78px;width:14px;text-align:center;font-size:26px;font-family:'Liberation Serif', serif;color:#ef7ea0;transform:scaleX(0.78)">.</div>
<div class="t" style="left:56px;top:-8.78px;width:14px;text-align:center;font-size:26px;font-family:'Liberation Serif', serif;color:#ef7ea0;transform:scaleX(0.78)">c</div>
<div class="t" style="left:70px;top:-8.78px;width:14px;text-align:center;font-size:26px;font-family:'Liberation Serif', serif;color:#ef7ea0;transform:scaleX(0.78)">o</div>
<div class="t" style="left:84px;top:-8.78px;width:14px;text-align:center;font-size:26px;font-family:'Liberation Serif', serif;color:#ef7ea0;transform:scaleX(0.78)">d</div>
<div class="t" style="left:98px;top:-8.78px;width:14px;text-align:center;font-size:26px;font-family:'Liberation Serif', serif;color:#ef7ea0;transform:scaleX(0.78)">e</div>
<div class="t" style="left:112px;top:-8.78px;width:14px;text-align:center;font-size:26px;font-family:'Liberation Serif', serif;color:#ef7ea0;transform:scaleX(0.78)">3</div>
<div class="t" style="left:126px;top:-8.78px;width:14px;text-align:center;font-size:26px;font-family:'Liberation Serif', serif;color:#ef7ea0;transform:scaleX(0.78)">8</div>
<div class="t" style="left:140px;top:-8.78px;width:14px;text-align:center;font-size:26px;font-family:'Liberation Serif', serif;color:#ef7ea0;transform:scaleX(0.78)">6</div>
<div class="t" style="left:154px;top:-8.78px;width:14px;text-align:center;font-size:26px;font-family:'Liberation Serif', serif;color:#ef7ea0;transform:scaleX(0.78)">.</div>
<div class="t" style="left:168px;top:-8.78px;width:14px;text-align:center;font-size:26px;font-family:'Liberation Serif', serif;color:#ef7ea0;transform:scaleX(0.78)">c</div>
<div class="t" style="left:182px;top:-8.78px;width:14px;text-align:center;font-size:26px;font-family:'Liberation Serif', serif;color:#ef7ea0;transform:scaleX(0.78)">o</div>
<div class="t" style="left:196px;top:-8.78px;width:14px;text-align:center;font-size:26px;font-family:'Liberation Serif', serif;color:#ef7ea0;transform:scaleX(0.78)">m</div>
</div>
<div class="r" style="left:842px;top:530px;width:0;height:0;transform:rotate(-29.8deg);transform-origin:0 0">
<div class="t" style="left:0px;top:-8.78px;width:14px;text-align:center;font-size:26px;font-family:'Liberation Serif', serif;color:#ef7ea0;transform:scaleX(0.78)">w</div>
<div class="t" style="left:14px;top:-8.78px;width:14px;text-align:center;font-size:26px;font-family:'Liberation Serif', serif;color:#ef7ea0;transform:scaleX(0.78)">w</div>
<div class="t" style="left:28px;top:-8.78px;width:14px;text-align:center;font-size:26px;font-family:'Liberation Serif', serif;color:#ef7ea0;transform:scaleX(0.78)">w</div>
<div class="t" style="left:42px;top:-8.78px;width:14px;text-align:center;font-size:26px;font-family:'Liberation Serif', serif;color:#ef7ea0;transform:scaleX(0.78)">.</div>
<div class="t" style="left:56px;top:-8.78px;width:14px;text-align:center;font-size:26px;font-family:'Liberation Serif', serif;color:#ef7ea0;transform:scaleX(0.78)">c</div>
<div class="t" style="left:70px;top:-8.78px;width:14px;text-align:center;font-size:26px;font-family:'Liberation Serif', serif;color:#ef7ea0;transform:scaleX(0.78)">o</div>
<div class="t" style="left:84px;top:-8.78px;width:14px;text-align:center;font-size:26px;font-family:'Liberation Serif', serif;color:#ef7ea0;transform:scaleX(0.78)">d</div>
<div class="t" style="left:98px;top:-8.78px;width:14px;text-align:center;font-size:26px;font-family:'Liberation Serif', serif;color:#ef7ea0;transform:scaleX(0.78)">e</div>
<div class="t" style="left:112px;top:-8.78px;width:14px;text-align:center;font-size:26px;font-family:'Liberation Serif', serif;color:#ef7ea0;transform:scaleX(0.78)">3</div>
<div class="t" style="left:126px;top:-8.78px;width:14px;text-align:center;font-size:26px;font-family:'Liberation Serif', serif;color:#ef7ea0;transform:scaleX(0.78)">8</div>
<div class="t" style="left:140px;top:-8.78px;width:14px;text-align:center;font-size:26px;font-family:'Liberation Serif', serif;color:#ef7ea0;transform:scaleX(0.78)">6</div>
<div class="t" style="left:154px;top:-8.78px;width:14px;text-align:center;font-size:26px;font-family:'Liberation Serif', serif;color:#ef7ea0;transform:scaleX(0.78)">.</div>
<div class="t" style="left:168px;top:-8.78px;width:14px;text-align:center;font-size:26px;font-family:'Liberation Serif', serif;color:#ef7ea0;transform:scaleX(0.78)">c</div>
<div class="t" style="left:182px;top:-8.78px;width:14px;text-align:center;font-size:26px;font-family:'Liberation Serif', serif;color:#ef7ea0;transform:scaleX(0.78)">o</div>
<div class="t" style="left:196px;top:-8.78px;width:14px;text-align:center;font-size:26px;font-family:'Liberation Serif', serif;color:#ef7ea0;transform:scaleX(0.78)">m</div>
</div>
<div class="r" style="left:1698px;top:530px;width:0;height:0;transform:rotate(-29.8deg);transform-origin:0 0">
<div class="t" style="left:0px;top:-8.78px;width:14px;text-align:center;font-size:26px;font-family:'Liberation Serif', serif;color:#ef7ea0;transform:scaleX(0.78)">w</div>
<div class="t" style="left:14px;top:-8.78px;width:14px;text-align:center;font-size:26px;font-family:'Liberation Serif', serif;color:#ef7ea0;transform:scaleX(0.78)">w</div>
<div class="t" style="left:28px;top:-8.78px;width:14px;text-align:center;font-size:26px;font-family:'Liberation Serif', serif;color:#ef7ea0;transform:scaleX(0.78)">w</div>
<div class="t" style="left:42px;top:-8.78px;width:14px;text-align:center;font-size:26px;font-family:'Liberation Serif', serif;color:#ef7ea0;transform:scaleX(0.78)">.</div>
<div class="t" style="left:56px;top:-8.78px;width:14px;text-align:center;font-size:26px;font-family:'Liberation Serif', serif;color:#ef7ea0;transform:scaleX(0.78)">c</div>
<div class="t" style="left:70px;top:-8.78px;width:14px;text-align:center;font-size:26px;font-family:'Liberation Serif', serif;color:#ef7ea0;transform:scaleX(0.78)">o</div>
<div class="t" style="left:84px;top:-8.78px;width:14px;text-align:center;font-size:26px;font-family:'Liberation Serif', serif;color:#ef7ea0;transform:scaleX(0.78)">d</div>
<div class="t" style="left:98px;top:-8.78px;width:14px;text-align:center;font-size:26px;font-family:'Liberation Serif', serif;color:#ef7ea0;transform:scaleX(0.78)">e</div>
<div class="t" style="left:112px;top:-8.78px;width:14px;text-align:center;font-size:26px;font-family:'Liberation Serif', serif;color:#ef7ea0;transform:scaleX(0.78)">3</div>
<div class="t" style="left:126px;top:-8.78px;width:14px;text-align:center;font-size:26px;font-family:'Liberation Serif', serif;color:#ef7ea0;transform:scaleX(0.78)">8</div>
<div class="t" style="left:140px;top:-8.78px;width:14px;text-align:center;font-size:26px;font-family:'Liberation Serif', serif;color:#ef7ea0;transform:scaleX(0.78)">6</div>
<div class="t" style="left:154px;top:-8.78px;width:14px;text-align:center;font-size:26px;font-family:'Liberation Serif', serif;color:#ef7ea0;transform:scaleX(0.78)">.</div>
<div class="t" style="left:168px;top:-8.78px;width:14px;text-align:center;font-size:26px;font-family:'Liberation Serif', serif;color:#ef7ea0;transform:scaleX(0.78)">c</div>
<div class="t" style="left:182px;top:-8.78px;width:14px;text-align:center;font-size:26px;font-family:'Liberation Serif', serif;color:#ef7ea0;transform:scaleX(0.78)">o</div>
<div class="t" style="left:196px;top:-8.78px;width:14px;text-align:center;font-size:26px;font-family:'Liberation Serif', serif;color:#ef7ea0;transform:scaleX(0.78)">m</div>
</div>
</body></html>
